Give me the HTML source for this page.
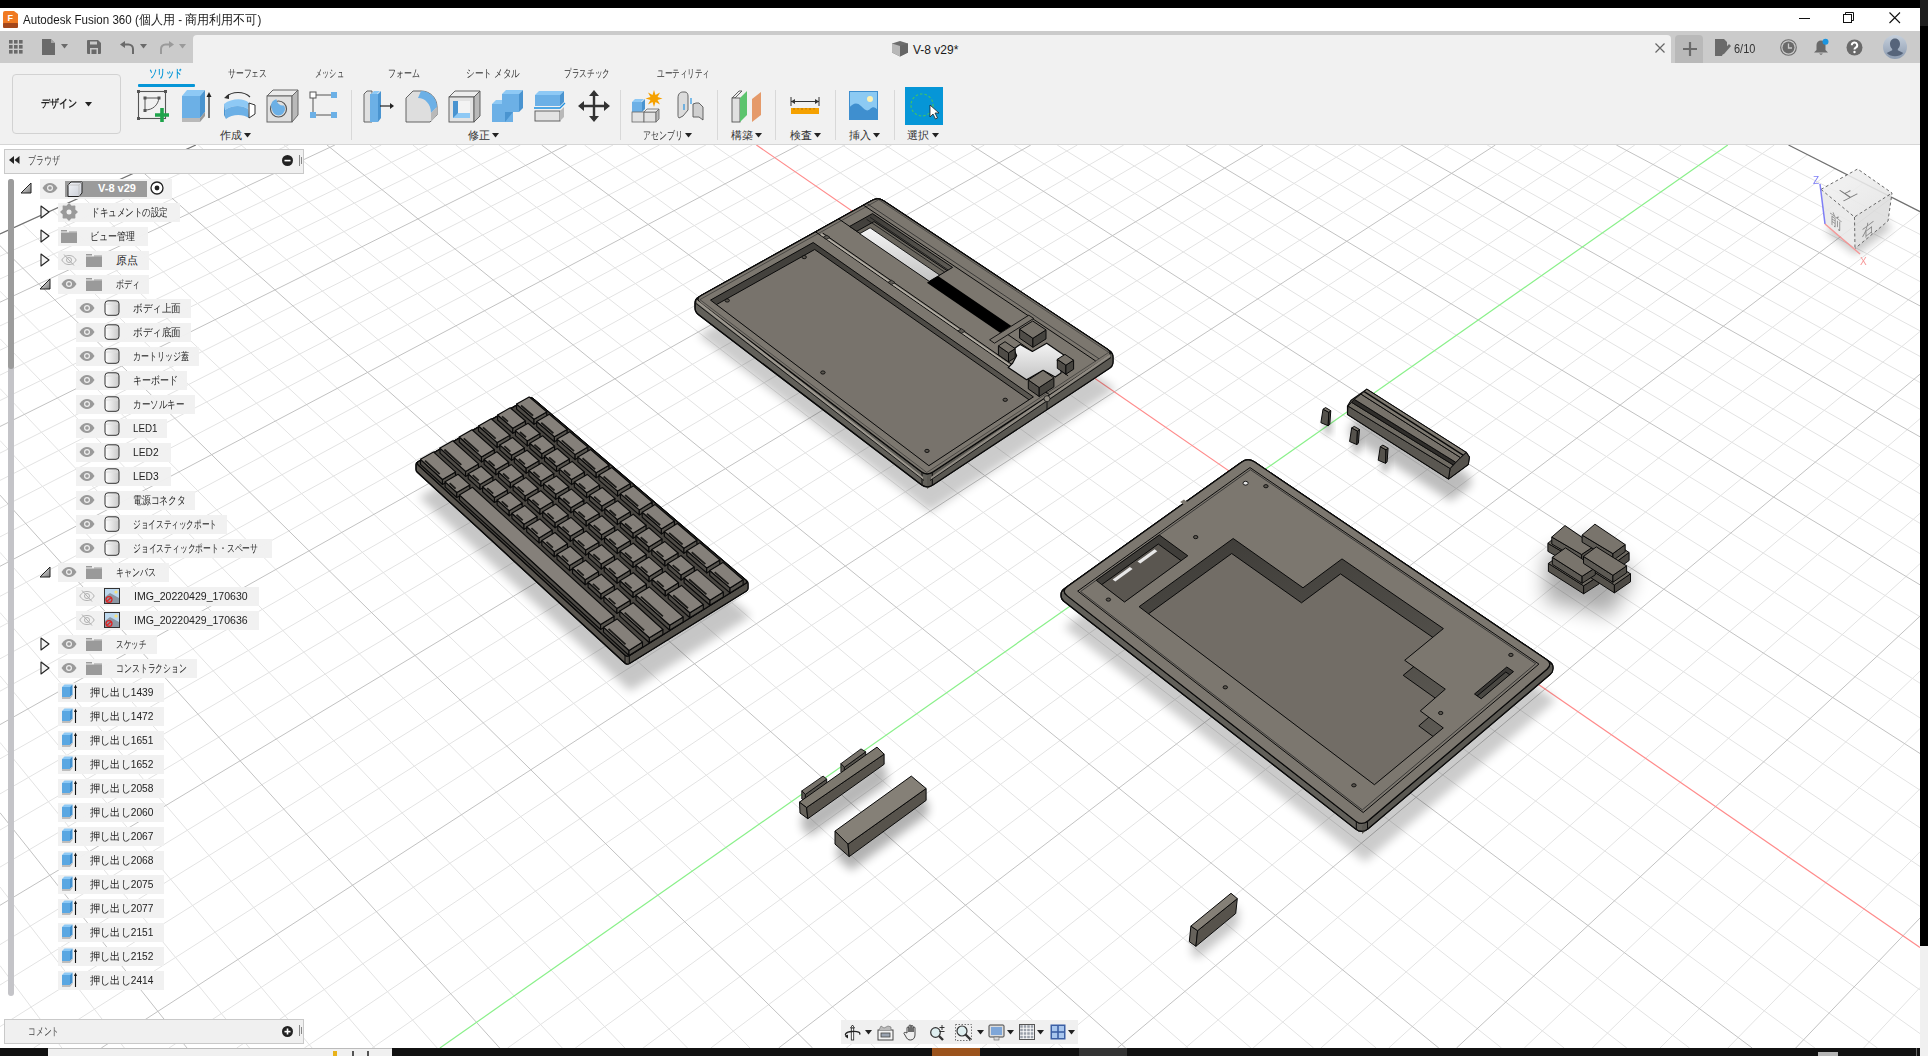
<!DOCTYPE html>
<html><head><meta charset="utf-8">
<style>
*{margin:0;padding:0;box-sizing:border-box}
html,body{width:1928px;height:1056px;overflow:hidden;background:#fff;font-family:"Liberation Sans",sans-serif;color:#222}
.a{position:absolute}
svg{position:absolute;overflow:visible}
</style></head><body>

<svg class="a" style="left:0;top:0" width="1928" height="1056" viewBox="0 0 1928 1056">
<clipPath id="gclip"><polygon points="195.8,145.0 1788.5,145.0 1920.0,211.6 1920.0,1048.0 0.0,1048.0 0.0,234.0"/></clipPath><g clip-path="url(#gclip)">
<path d="M0.0 965.6L61.9 1048.0M0.0 887.0L124.4 1048.0M0.0 742.4L249.5 1048.0M0.0 675.8L312.1 1048.0M0.0 612.5L374.6 1048.0M0.0 552.3L437.2 1048.0M0.0 440.5L562.3 1048.0M0.0 388.5L624.9 1048.0M0.0 338.7L687.5 1048.0M1920.0 987.5L1863.6 1048.0M0.0 291.2L750.0 1048.0M1920.0 851.8L1727.9 1048.0M0.0 202.2L875.2 1048.0M1920.0 788.8L1660.0 1048.0M0.0 160.4L937.8 1048.0M1920.0 728.6L1592.2 1048.0M26.6 145.0L1000.4 1048.0M1920.0 671.2L1524.3 1048.0M69.5 145.0L1063.0 1048.0M1920.0 563.7L1388.7 1048.0M155.3 145.0L1188.3 1048.0M1920.0 513.3L1320.9 1048.0M198.2 145.0L1250.9 1048.0M1920.0 465.0L1253.1 1048.0M241.1 145.0L1313.6 1048.0M1920.0 418.7L1185.3 1048.0M284.0 145.0L1376.2 1048.0M1920.0 331.5L1049.7 1048.0M369.9 145.0L1501.5 1048.0M1920.0 290.4L981.9 1048.0M412.8 145.0L1564.2 1048.0M1920.0 250.8L914.1 1048.0M455.7 145.0L1626.8 1048.0M1920.0 212.6L846.3 1048.0M498.7 145.0L1689.5 1048.0M1913.9 145.0L710.8 1048.0M584.5 145.0L1814.9 1048.0M1867.3 145.0L643.1 1048.0M627.5 145.0L1877.5 1048.0M1820.8 145.0L575.3 1048.0M1920.0 1033.6L670.4 145.0M1774.3 145.0L507.6 1048.0M1920.0 989.9L713.4 145.0M1681.3 145.0L372.1 1048.0M1920.0 906.4L799.3 145.0M1634.8 145.0L304.4 1048.0M1920.0 866.5L842.3 145.0M1588.3 145.0L236.7 1048.0M1920.0 827.8L885.2 145.0M1541.9 145.0L169.0 1048.0M1920.0 790.1L928.2 145.0M1448.9 145.0L33.6 1048.0M1920.0 717.9L1014.2 145.0M0.0 1026.6L1402.4 145.0M1920.0 683.2L1057.2 145.0M0.0 985.0L1356.0 145.0M1920.0 649.5L1100.1 145.0M0.0 944.6L1309.5 145.0M1920.0 616.7L1143.1 145.0M0.0 867.1L1216.6 145.0M1920.0 553.6L1229.1 145.0M0.0 830.0L1170.2 145.0M1920.0 523.3L1272.1 145.0M0.0 793.9L1123.7 145.0M1920.0 493.7L1315.1 145.0M0.0 758.8L1077.3 145.0M1920.0 464.9L1358.2 145.0M0.0 691.2L984.4 145.0M1920.0 409.3L1444.2 145.0M0.0 658.8L938.0 145.0M1920.0 382.5L1487.2 145.0M0.0 627.2L891.6 145.0M1920.0 356.4L1530.2 145.0M0.0 596.3L845.2 145.0M1920.0 330.8L1573.3 145.0M0.0 536.9L752.3 145.0M1920.0 281.5L1659.3 145.0M0.0 508.3L705.9 145.0M1920.0 257.7L1702.4 145.0M0.0 480.4L659.5 145.0M1920.0 234.4L1745.4 145.0M0.0 453.1L613.1 145.0M1920.0 211.6L1788.5 145.0M0.0 400.5L520.4 145.0M1920.0 167.5L1874.6 145.0M0.0 375.1L474.0 145.0M1920.0 146.1L1917.7 145.0M0.0 350.2L427.6 145.0M0.0 325.9L381.3 145.0M0.0 279.0L288.5 145.0M0.0 256.2L242.2 145.0M0.0 234.0L195.8 145.0M0.0 212.2L149.5 145.0M0.0 170.0L56.8 145.0M0.0 149.6L10.5 145.0" stroke="#e3e3e3" stroke-width="1" fill="none"/>
<path d="M0.0 812.7L187.0 1048.0M0.0 495.1L499.7 1048.0M1920.0 918.0L1795.7 1048.0M0.0 245.7L812.6 1048.0M1920.0 616.2L1456.5 1048.0M112.4 145.0L1125.7 1048.0M1920.0 374.2L1117.5 1048.0M327.0 145.0L1438.8 1048.0M1920.0 175.9L778.6 1048.0M541.6 145.0L1752.2 1048.0M1495.4 145.0L101.3 1048.0M1920.0 753.5L971.2 145.0M0.0 905.3L1263.1 145.0M1920.0 584.8L1186.1 145.0M0.0 724.6L1030.8 145.0M1920.0 436.8L1401.2 145.0M0.0 566.3L798.7 145.0M1920.0 305.9L1616.3 145.0M0.0 426.5L566.8 145.0M1920.0 189.3L1831.5 145.0M0.0 302.2L334.9 145.0M0.0 190.9L103.1 145.0" stroke="#c2c2c2" stroke-width="1" fill="none"/>
</g>
<line x1="1920.0" y1="211.6" x2="1788.5" y2="145.0" stroke="#707070" stroke-width="1.2"/>
<line x1="0.0" y1="234.0" x2="195.8" y2="145.0" stroke="#707070" stroke-width="1.2"/>
<path d="M1920.0 947.6L756.4 145.0" stroke="#ff8a8a" stroke-width="1.2" fill="none"/>
<path d="M1727.8 145.0L439.9 1048.0" stroke="#8af08a" stroke-width="1.2" fill="none"/>
<defs><filter id="blur3" x="-30%" y="-30%" width="160%" height="160%"><feGaussianBlur stdDeviation="3"/></filter><filter id="blur5" x="-30%" y="-30%" width="160%" height="160%"><feGaussianBlur stdDeviation="5"/></filter><filter id="blur8" x="-30%" y="-30%" width="160%" height="160%"><feGaussianBlur stdDeviation="8"/></filter><filter id="blur10" x="-30%" y="-30%" width="160%" height="160%"><feGaussianBlur stdDeviation="10"/></filter><linearGradient id="holeg" x1="0" y1="0" x2="0" y2="1"><stop offset="0" stop-color="#f4f4f4"/><stop offset="1" stop-color="#c4c4c4"/></linearGradient><linearGradient id="wallg" x1="0" y1="0" x2="0.3" y2="1"><stop offset="0" stop-color="#3e3c38"/><stop offset="1" stop-color="#5c5953"/></linearGradient></defs><g filter="url(#blur5)" opacity="0.2"><polygon points="698.0,335.0 930.0,512.0 1116.0,389.0 881.0,233.0" fill="#000"  /></g><path d="M871.9 200.4Q878.0 197.0 883.8 200.9L1109.5 350.7Q1113.0 353.0 1113.0 357.2L1113.0 361.8Q1113.0 366.0 1109.5 368.3L932.8 485.1Q927.0 489.0 921.4 484.8L698.3 314.5Q695.0 312.0 695.0 307.8L695.0 303.2Q695.0 299.0 698.7 297.0Z" fill="#62605a" stroke="#0a0a0a" stroke-width="1.2" stroke-linejoin="round"/><polygon points="927.0,476.0 1113.0,353.0 1113.0,366.0 927.0,489.0" fill="#5a5852"  /><path d="M701.1 295.6Q695.0 299.0 700.6 303.2L921.4 471.8Q927.0 476.0 932.8 472.1L1107.2 356.9Q1113.0 353.0 1107.2 349.1L883.8 200.9Q878.0 197.0 871.9 200.4Z" fill="#7c776f" stroke="#0a0a0a" stroke-width="1.2" stroke-linejoin="round"/><line x1="922.0" y1="472.2" x2="922.0" y2="484.7" stroke="#0a0a0a" stroke-width="1" /><line x1="932.3" y1="472.5" x2="932.3" y2="485.0" stroke="#0a0a0a" stroke-width="1" /><path d="M871.9 200.4Q878.0 197.0 883.8 200.9L1109.5 350.7Q1113.0 353.0 1113.0 357.2L1113.0 361.8Q1113.0 366.0 1109.5 368.3L932.8 485.1Q927.0 489.0 921.4 484.8L698.3 314.5Q695.0 312.0 695.0 307.8L695.0 303.2Q695.0 299.0 698.7 297.0Z" fill="none" stroke="#0a0a0a" stroke-width="1.2" stroke-linejoin="round"/><path d="M701.1 295.6Q695.0 299.0 700.6 303.2L921.4 471.8Q927.0 476.0 932.8 472.1L1107.2 356.9Q1113.0 353.0 1107.2 349.1L883.8 200.9Q878.0 197.0 871.9 200.4Z" fill="#7c776f" stroke="#0a0a0a" stroke-width="1.2" stroke-linejoin="round"/><polygon points="697.0,300.0 923.0,477.0 923.0,480.0 697.0,303.0" fill="#9c978e"  /><polygon points="931.0,477.0 1110.0,354.0 1110.0,357.0 931.0,480.0" fill="#8f8a82"  /><line x1="696.0" y1="303.5" x2="924.0" y2="480.5" stroke="#0a0a0a" stroke-width="0.9" /><line x1="930.0" y1="480.5" x2="1111.0" y2="357.5" stroke="#0a0a0a" stroke-width="0.9" /><clipPath id="lidpk"><polygon points="710.5,300.1 928.9,465.7 1033.4,396.9 813.2,242.5"/></clipPath><polygon points="710.5,300.1 928.9,465.7 1033.4,396.9 813.2,242.5" fill="url(#wallg)"  /><g clip-path="url(#lidpk)"><polygon points="712.0,307.1 930.4,472.7 1034.9,403.9 814.7,249.5" fill="#78736c" stroke="#0a0a0a" stroke-width="1" stroke-linejoin="round" /></g><polygon points="710.5,300.1 928.9,465.7 1033.4,396.9 813.2,242.5" fill="none" stroke="#0a0a0a" stroke-width="1" stroke-linejoin="round" /><polygon points="699.9,299.6 926.8,472.5 1108.7,352.4 878.8,199.7" fill="none" stroke="#2a2a2a" stroke-width="0.6" stroke-linejoin="round" /><line x1="815.5" y1="231.8" x2="1049.7" y2="394.8" stroke="#0a0a0a" stroke-width="1" /><line x1="821.0" y1="234.1" x2="1043.3" y2="388.7" stroke="#b5b0a6" stroke-width="1.6" /><line x1="822.8" y1="233.1" x2="1045.1" y2="387.5" stroke="#0a0a0a" stroke-width="1" /><polygon points="823.2,237.2 826.4,239.4 830.0,237.4 826.8,235.2" fill="#5d5a54" stroke="#0a0a0a" stroke-width="0.7" stroke-linejoin="round" /><polygon points="888.0,282.3 891.4,284.7 895.0,282.5 891.6,280.2" fill="#5d5a54" stroke="#0a0a0a" stroke-width="0.7" stroke-linejoin="round" /><polygon points="957.9,330.9 961.5,333.4 965.1,331.2 961.5,328.7" fill="#5d5a54" stroke="#0a0a0a" stroke-width="0.7" stroke-linejoin="round" /><line x1="838.7" y1="218.9" x2="1068.1" y2="375.8" stroke="#0a0a0a" stroke-width="1" /><clipPath id="lidch"><polygon points="849.6,226.4 929.6,281.1 952.6,267.4 872.5,213.6"/></clipPath><polygon points="849.6,226.4 929.6,281.1 952.6,267.4 872.5,213.6" fill="url(#wallg)"  /><g clip-path="url(#lidch)"><polygon points="851.1,234.4 931.1,289.1 954.1,275.4 874.0,221.6" fill="#6a665e" stroke="#0a0a0a" stroke-width="1" stroke-linejoin="round" /></g><polygon points="849.6,226.4 929.6,281.1 952.6,267.4 872.5,213.6" fill="none" stroke="#0a0a0a" stroke-width="1" stroke-linejoin="round" /><line x1="870.1" y1="217.3" x2="948.2" y2="270.0" stroke="#1a1a1a" stroke-width="0.9" /><line x1="866.6" y1="219.3" x2="944.7" y2="272.1" stroke="#1a1a1a" stroke-width="0.9" /><polygon points="859.7,233.7 929.2,281.3 939.7,275.1 870.1,227.8" fill="url(#holeg)" stroke="#0a0a0a" stroke-width="0.9" stroke-linejoin="round" /><polygon points="926.9,282.7 1000.4,333.0 1011.4,326.0 938.0,276.1" fill="#000"  /><line x1="863.4" y1="205.1" x2="1095.7" y2="361.0" stroke="#0a0a0a" stroke-width="1" /><line x1="866.7" y1="203.3" x2="1099.1" y2="358.8" stroke="#2a2a2a" stroke-width="0.8" /><polygon points="989.6,339.8 994.5,343.2 1033.7,318.4 1028.8,315.2" fill="#7c776f" stroke="#0a0a0a" stroke-width="0.9" stroke-linejoin="round" /><polygon points="1008.2,367.6 1026.5,379.7 1043.1,370.3 1055.2,377.1 1061.0,372.9 1061.1,366.0 1057.3,360.3 1064.6,355.6 1046.7,343.2 1032.4,351.4 1020.2,344.4 1013.6,348.9 1016.6,355.6 1012.7,363.0" fill="url(#holeg)" stroke="#0a0a0a" stroke-width="1.2" stroke-linejoin="round" /><polygon points="1019.6,329.2 1032.9,338.3 1032.9,347.3 1019.6,338.2" fill="#4f4c47" stroke="#0a0a0a" stroke-width="1" stroke-linejoin="round" /><polygon points="1032.9,338.3 1046.0,329.9 1046.0,338.9 1032.9,347.3" fill="#46443f" stroke="#0a0a0a" stroke-width="1" stroke-linejoin="round" /><polygon points="1019.6,329.2 1032.9,338.3 1046.0,329.9 1032.7,321.0" fill="#77726a" stroke="#0a0a0a" stroke-width="1" stroke-linejoin="round" /><polygon points="1057.3,359.3 1065.9,365.2 1065.9,374.2 1057.3,368.3" fill="#4f4c47" stroke="#0a0a0a" stroke-width="1" stroke-linejoin="round" /><polygon points="1065.9,365.2 1073.6,360.2 1073.6,369.2 1065.9,374.2" fill="#46443f" stroke="#0a0a0a" stroke-width="1" stroke-linejoin="round" /><polygon points="1057.3,359.3 1065.9,365.2 1073.6,360.2 1065.0,354.4" fill="#77726a" stroke="#0a0a0a" stroke-width="1" stroke-linejoin="round" /><polygon points="998.4,345.9 1008.5,352.9 1008.5,361.9 998.4,354.9" fill="#4f4c47" stroke="#0a0a0a" stroke-width="1" stroke-linejoin="round" /><polygon points="1008.5,352.9 1015.2,348.6 1015.2,357.6 1008.5,361.9" fill="#46443f" stroke="#0a0a0a" stroke-width="1" stroke-linejoin="round" /><polygon points="998.4,345.9 1008.5,352.9 1015.2,348.6 1005.0,341.7" fill="#77726a" stroke="#0a0a0a" stroke-width="1" stroke-linejoin="round" /><polygon points="1028.3,379.9 1039.2,387.5 1039.2,396.5 1028.3,388.9" fill="#4f4c47" stroke="#0a0a0a" stroke-width="1" stroke-linejoin="round" /><polygon points="1039.2,387.5 1053.9,377.9 1053.9,386.9 1039.2,396.5" fill="#46443f" stroke="#0a0a0a" stroke-width="1" stroke-linejoin="round" /><polygon points="1028.3,379.9 1039.2,387.5 1053.9,377.9 1043.0,370.4" fill="#77726a" stroke="#0a0a0a" stroke-width="1" stroke-linejoin="round" /><ellipse cx="804.2" cy="257.1" rx="2.2" ry="1.6" fill="#5b5750" stroke="#0a0a0a" stroke-width="0.9"/><ellipse cx="727.2" cy="300.5" rx="2.2" ry="1.6" fill="#5b5750" stroke="#0a0a0a" stroke-width="0.9"/><ellipse cx="822.9" cy="372.5" rx="2.2" ry="1.6" fill="#5b5750" stroke="#0a0a0a" stroke-width="0.9"/><ellipse cx="927.0" cy="450.9" rx="2.2" ry="1.6" fill="#5b5750" stroke="#0a0a0a" stroke-width="0.9"/><ellipse cx="1005.2" cy="399.8" rx="2.2" ry="1.6" fill="#5b5750" stroke="#0a0a0a" stroke-width="0.9"/><line x1="1047.0" y1="396.7" x2="1047.0" y2="409.7" stroke="#0a0a0a" stroke-width="0.9" /><circle cx="1047.0" cy="398.7" r="3" fill="#8f8a81" stroke="#141414" stroke-width=".8"/><g filter="url(#blur5)" opacity="0.22"><polygon points="419.0,497.0 630.0,691.0 751.0,616.0 534.0,431.0" fill="#000"  /></g><path d="M528.4 398.5Q531.0 397.0 533.3 398.9L746.6 580.8Q748.0 582.0 748.0 583.8L748.0 588.2Q748.0 590.0 746.5 590.9L629.5 663.4Q627.0 665.0 624.8 663.0L417.3 472.2Q416.0 471.0 416.0 469.2L416.0 464.8Q416.0 463.0 417.6 462.1Z" fill="#5a5650" stroke="#0a0a0a" stroke-width="1.2" stroke-linejoin="round"/><polygon points="627.0,657.0 748.0,582.0 748.0,590.0 627.0,665.0" fill="#524f49"  /><path d="M418.6 461.5Q416.0 463.0 418.2 465.0L624.8 655.0Q627.0 657.0 629.5 655.4L745.5 583.6Q748.0 582.0 745.7 580.1L533.3 398.9Q531.0 397.0 528.4 398.5Z" fill="#4a4742" stroke="#0a0a0a" stroke-width="1.2" stroke-linejoin="round"/><line x1="625.0" y1="655.2" x2="625.0" y2="662.7" stroke="#0a0a0a" stroke-width="1" /><line x1="629.3" y1="655.6" x2="629.3" y2="663.1" stroke="#0a0a0a" stroke-width="1" /><path d="M528.4 398.5Q531.0 397.0 533.3 398.9L746.6 580.8Q748.0 582.0 748.0 583.8L748.0 588.2Q748.0 590.0 746.5 590.9L629.5 663.4Q627.0 665.0 624.8 663.0L417.3 472.2Q416.0 471.0 416.0 469.2L416.0 464.8Q416.0 463.0 417.6 462.1Z" fill="none" stroke="#0a0a0a" stroke-width="1.2" stroke-linejoin="round"/><path d="M418.6 461.5Q416.0 463.0 418.2 465.0L624.8 655.0Q627.0 657.0 629.5 655.4L745.5 583.6Q748.0 582.0 745.7 580.1L533.3 398.9Q531.0 397.0 528.4 398.5Z" fill="#4a4742" stroke="#0a0a0a" stroke-width="1.2" stroke-linejoin="round"/><polygon points="516.6,404.1 534.0,419.2 534.0,424.2 516.6,409.1" fill="#4f4c47" stroke="#0a0a0a" stroke-width="1.15" stroke-linejoin="round" /><polygon points="534.0,419.2 546.7,411.9 546.7,416.9 534.0,424.2" fill="#57544e" stroke="#0a0a0a" stroke-width="1.15" stroke-linejoin="round" /><polygon points="516.6,404.1 534.0,419.2 546.7,411.9 529.1,396.9" fill="#85807a" stroke="#0a0a0a" stroke-width="1.15" stroke-linejoin="round" /><line x1="521.0" y1="405.5" x2="533.1" y2="415.8" stroke="#1c1b19" stroke-width="1.8" /><polygon points="536.7,421.5 554.4,436.8 554.4,441.8 536.7,426.5" fill="#4f4c47" stroke="#0a0a0a" stroke-width="1.15" stroke-linejoin="round" /><polygon points="554.4,436.8 567.1,429.4 567.1,434.4 554.4,441.8" fill="#57544e" stroke="#0a0a0a" stroke-width="1.15" stroke-linejoin="round" /><polygon points="536.7,421.5 554.4,436.8 567.1,429.4 549.3,414.2" fill="#85807a" stroke="#0a0a0a" stroke-width="1.15" stroke-linejoin="round" /><line x1="541.2" y1="422.8" x2="553.4" y2="433.3" stroke="#1c1b19" stroke-width="1.8" /><polygon points="557.1,439.1 575.1,454.6 575.1,459.6 557.1,444.1" fill="#4f4c47" stroke="#0a0a0a" stroke-width="1.15" stroke-linejoin="round" /><polygon points="575.1,454.6 587.9,447.1 587.9,452.1 575.1,459.6" fill="#57544e" stroke="#0a0a0a" stroke-width="1.15" stroke-linejoin="round" /><polygon points="557.1,439.1 575.1,454.6 587.9,447.1 569.8,431.7" fill="#85807a" stroke="#0a0a0a" stroke-width="1.15" stroke-linejoin="round" /><line x1="561.7" y1="440.4" x2="574.1" y2="451.1" stroke="#1c1b19" stroke-width="1.8" /><polygon points="577.9,456.9 596.2,472.7 596.2,477.7 577.9,461.9" fill="#4f4c47" stroke="#0a0a0a" stroke-width="1.15" stroke-linejoin="round" /><polygon points="596.2,472.7 609.0,465.2 609.0,470.2 596.2,477.7" fill="#57544e" stroke="#0a0a0a" stroke-width="1.15" stroke-linejoin="round" /><polygon points="577.9,456.9 596.2,472.7 609.0,465.2 590.6,449.5" fill="#85807a" stroke="#0a0a0a" stroke-width="1.15" stroke-linejoin="round" /><line x1="582.5" y1="458.3" x2="595.1" y2="469.2" stroke="#1c1b19" stroke-width="1.8" /><polygon points="599.0,475.1 617.6,491.1 617.6,496.1 599.0,480.1" fill="#4f4c47" stroke="#0a0a0a" stroke-width="1.15" stroke-linejoin="round" /><polygon points="617.6,491.1 630.4,483.5 630.4,488.5 617.6,496.1" fill="#57544e" stroke="#0a0a0a" stroke-width="1.15" stroke-linejoin="round" /><polygon points="599.0,475.1 617.6,491.1 630.4,483.5 611.8,467.5" fill="#85807a" stroke="#0a0a0a" stroke-width="1.15" stroke-linejoin="round" /><line x1="603.6" y1="476.5" x2="616.5" y2="487.6" stroke="#1c1b19" stroke-width="1.8" /><polygon points="620.4,493.6 639.3,509.9 639.3,514.9 620.4,498.6" fill="#4f4c47" stroke="#0a0a0a" stroke-width="1.15" stroke-linejoin="round" /><polygon points="639.3,509.9 652.2,502.1 652.2,507.1 639.3,514.9" fill="#57544e" stroke="#0a0a0a" stroke-width="1.15" stroke-linejoin="round" /><polygon points="620.4,493.6 639.3,509.9 652.2,502.1 633.3,485.9" fill="#85807a" stroke="#0a0a0a" stroke-width="1.15" stroke-linejoin="round" /><line x1="625.1" y1="495.0" x2="638.2" y2="506.2" stroke="#1c1b19" stroke-width="1.8" /><polygon points="642.2,512.3 661.4,528.9 661.4,533.9 642.2,517.3" fill="#4f4c47" stroke="#0a0a0a" stroke-width="1.15" stroke-linejoin="round" /><polygon points="661.4,528.9 674.4,521.0 674.4,526.0 661.4,533.9" fill="#57544e" stroke="#0a0a0a" stroke-width="1.15" stroke-linejoin="round" /><polygon points="642.2,512.3 661.4,528.9 674.4,521.0 655.1,504.6" fill="#85807a" stroke="#0a0a0a" stroke-width="1.15" stroke-linejoin="round" /><line x1="646.9" y1="513.8" x2="660.2" y2="525.2" stroke="#1c1b19" stroke-width="1.8" /><polygon points="664.3,531.4 683.9,548.2 683.9,553.2 664.3,536.4" fill="#4f4c47" stroke="#0a0a0a" stroke-width="1.15" stroke-linejoin="round" /><polygon points="683.9,548.2 696.9,540.3 696.9,545.3 683.9,553.2" fill="#57544e" stroke="#0a0a0a" stroke-width="1.15" stroke-linejoin="round" /><polygon points="664.3,531.4 683.9,548.2 696.9,540.3 677.3,523.5" fill="#85807a" stroke="#0a0a0a" stroke-width="1.15" stroke-linejoin="round" /><line x1="669.1" y1="532.9" x2="682.6" y2="544.5" stroke="#1c1b19" stroke-width="1.8" /><polygon points="686.8,550.8 706.7,567.9 706.7,572.9 686.8,555.8" fill="#4f4c47" stroke="#0a0a0a" stroke-width="1.15" stroke-linejoin="round" /><polygon points="706.7,567.9 719.8,559.9 719.8,564.9 706.7,572.9" fill="#57544e" stroke="#0a0a0a" stroke-width="1.15" stroke-linejoin="round" /><polygon points="686.8,550.8 706.7,567.9 719.8,559.9 699.9,542.8" fill="#85807a" stroke="#0a0a0a" stroke-width="1.15" stroke-linejoin="round" /><line x1="691.7" y1="552.3" x2="705.4" y2="564.1" stroke="#1c1b19" stroke-width="1.8" /><polygon points="709.7,570.5 730.0,587.9 730.0,592.9 709.7,575.5" fill="#4f4c47" stroke="#0a0a0a" stroke-width="1.15" stroke-linejoin="round" /><polygon points="730.0,587.9 743.1,579.8 743.1,584.8 730.0,592.9" fill="#57544e" stroke="#0a0a0a" stroke-width="1.15" stroke-linejoin="round" /><polygon points="709.7,570.5 730.0,587.9 743.1,579.8 722.9,562.4" fill="#85807a" stroke="#0a0a0a" stroke-width="1.15" stroke-linejoin="round" /><line x1="714.7" y1="572.1" x2="728.6" y2="584.1" stroke="#1c1b19" stroke-width="1.8" /><polygon points="497.6,415.0 512.8,428.3 512.8,433.3 497.6,420.0" fill="#4f4c47" stroke="#0a0a0a" stroke-width="1.15" stroke-linejoin="round" /><polygon points="512.8,428.3 525.5,421.0 525.5,426.0 512.8,433.3" fill="#57544e" stroke="#0a0a0a" stroke-width="1.15" stroke-linejoin="round" /><polygon points="497.6,415.0 512.8,428.3 525.5,421.0 510.2,407.8" fill="#85807a" stroke="#0a0a0a" stroke-width="1.15" stroke-linejoin="round" /><line x1="502.0" y1="416.4" x2="508.0" y2="421.6" stroke="#1c1b19" stroke-width="1.8" /><polygon points="515.4,430.6 527.3,440.9 527.3,445.9 515.4,435.6" fill="#4f4c47" stroke="#0a0a0a" stroke-width="1.15" stroke-linejoin="round" /><polygon points="527.3,440.9 540.0,433.5 540.0,438.5 527.3,445.9" fill="#57544e" stroke="#0a0a0a" stroke-width="1.15" stroke-linejoin="round" /><polygon points="515.4,430.6 527.3,440.9 540.0,433.5 528.1,423.3" fill="#85807a" stroke="#0a0a0a" stroke-width="1.15" stroke-linejoin="round" /><line x1="519.9" y1="432.0" x2="526.0" y2="437.3" stroke="#1c1b19" stroke-width="1.8" /><polygon points="529.9,443.2 541.9,453.7 541.9,458.7 529.9,448.2" fill="#4f4c47" stroke="#0a0a0a" stroke-width="1.15" stroke-linejoin="round" /><polygon points="541.9,453.7 554.6,446.2 554.6,451.2 541.9,458.7" fill="#57544e" stroke="#0a0a0a" stroke-width="1.15" stroke-linejoin="round" /><polygon points="529.9,443.2 541.9,453.7 554.6,446.2 542.6,435.8" fill="#85807a" stroke="#0a0a0a" stroke-width="1.15" stroke-linejoin="round" /><line x1="534.4" y1="444.6" x2="540.6" y2="450.0" stroke="#1c1b19" stroke-width="1.8" /><polygon points="544.5,456.0 556.6,466.5 556.6,471.5 544.5,461.0" fill="#4f4c47" stroke="#0a0a0a" stroke-width="1.15" stroke-linejoin="round" /><polygon points="556.6,466.5 569.4,459.0 569.4,464.0 556.6,471.5" fill="#57544e" stroke="#0a0a0a" stroke-width="1.15" stroke-linejoin="round" /><polygon points="544.5,456.0 556.6,466.5 569.4,459.0 557.3,448.5" fill="#85807a" stroke="#0a0a0a" stroke-width="1.15" stroke-linejoin="round" /><line x1="549.1" y1="457.4" x2="555.3" y2="462.8" stroke="#1c1b19" stroke-width="1.8" /><polygon points="559.3,468.9 571.6,479.6 571.6,484.6 559.3,473.9" fill="#4f4c47" stroke="#0a0a0a" stroke-width="1.15" stroke-linejoin="round" /><polygon points="571.6,479.6 584.4,472.0 584.4,477.0 571.6,484.6" fill="#57544e" stroke="#0a0a0a" stroke-width="1.15" stroke-linejoin="round" /><polygon points="559.3,468.9 571.6,479.6 584.4,472.0 572.1,461.4" fill="#85807a" stroke="#0a0a0a" stroke-width="1.15" stroke-linejoin="round" /><line x1="563.9" y1="470.3" x2="570.2" y2="475.8" stroke="#1c1b19" stroke-width="1.8" /><polygon points="574.3,482.0 586.7,492.7 586.7,497.7 574.3,487.0" fill="#4f4c47" stroke="#0a0a0a" stroke-width="1.15" stroke-linejoin="round" /><polygon points="586.7,492.7 599.6,485.1 599.6,490.1 586.7,497.7" fill="#57544e" stroke="#0a0a0a" stroke-width="1.15" stroke-linejoin="round" /><polygon points="574.3,482.0 586.7,492.7 599.6,485.1 587.2,474.4" fill="#85807a" stroke="#0a0a0a" stroke-width="1.15" stroke-linejoin="round" /><line x1="578.9" y1="483.4" x2="585.3" y2="488.9" stroke="#1c1b19" stroke-width="1.8" /><polygon points="589.4,495.2 602.0,506.1 602.0,511.1 589.4,500.2" fill="#4f4c47" stroke="#0a0a0a" stroke-width="1.15" stroke-linejoin="round" /><polygon points="602.0,506.1 614.9,498.4 614.9,503.4 602.0,511.1" fill="#57544e" stroke="#0a0a0a" stroke-width="1.15" stroke-linejoin="round" /><polygon points="589.4,495.2 602.0,506.1 614.9,498.4 602.3,487.5" fill="#85807a" stroke="#0a0a0a" stroke-width="1.15" stroke-linejoin="round" /><line x1="594.1" y1="496.6" x2="600.5" y2="502.2" stroke="#1c1b19" stroke-width="1.8" /><polygon points="604.8,508.5 617.4,519.6 617.4,524.6 604.8,513.5" fill="#4f4c47" stroke="#0a0a0a" stroke-width="1.15" stroke-linejoin="round" /><polygon points="617.4,519.6 630.4,511.8 630.4,516.8 617.4,524.6" fill="#57544e" stroke="#0a0a0a" stroke-width="1.15" stroke-linejoin="round" /><polygon points="604.8,508.5 617.4,519.6 630.4,511.8 617.7,500.8" fill="#85807a" stroke="#0a0a0a" stroke-width="1.15" stroke-linejoin="round" /><line x1="609.5" y1="510.0" x2="616.0" y2="515.7" stroke="#1c1b19" stroke-width="1.8" /><polygon points="620.3,522.0 633.1,533.2 633.1,538.2 620.3,527.0" fill="#4f4c47" stroke="#0a0a0a" stroke-width="1.15" stroke-linejoin="round" /><polygon points="633.1,533.2 646.1,525.3 646.1,530.3 633.1,538.2" fill="#57544e" stroke="#0a0a0a" stroke-width="1.15" stroke-linejoin="round" /><polygon points="620.3,522.0 633.1,533.2 646.1,525.3 633.3,514.2" fill="#85807a" stroke="#0a0a0a" stroke-width="1.15" stroke-linejoin="round" /><line x1="625.0" y1="523.5" x2="631.6" y2="529.3" stroke="#1c1b19" stroke-width="1.8" /><polygon points="635.9,535.7 648.9,547.0 648.9,552.0 635.9,540.7" fill="#4f4c47" stroke="#0a0a0a" stroke-width="1.15" stroke-linejoin="round" /><polygon points="648.9,547.0 662.0,539.1 662.0,544.1 648.9,552.0" fill="#57544e" stroke="#0a0a0a" stroke-width="1.15" stroke-linejoin="round" /><polygon points="635.9,535.7 648.9,547.0 662.0,539.1 649.0,527.8" fill="#85807a" stroke="#0a0a0a" stroke-width="1.15" stroke-linejoin="round" /><line x1="640.7" y1="537.2" x2="647.4" y2="543.0" stroke="#1c1b19" stroke-width="1.8" /><polygon points="651.8,549.6 664.9,561.0 664.9,566.0 651.8,554.6" fill="#4f4c47" stroke="#0a0a0a" stroke-width="1.15" stroke-linejoin="round" /><polygon points="664.9,561.0 678.1,553.0 678.1,558.0 664.9,566.0" fill="#57544e" stroke="#0a0a0a" stroke-width="1.15" stroke-linejoin="round" /><polygon points="651.8,549.6 664.9,561.0 678.1,553.0 664.9,541.6" fill="#85807a" stroke="#0a0a0a" stroke-width="1.15" stroke-linejoin="round" /><line x1="656.6" y1="551.1" x2="663.4" y2="556.9" stroke="#1c1b19" stroke-width="1.8" /><polygon points="667.9,563.6 681.1,575.1 681.1,580.1 667.9,568.6" fill="#4f4c47" stroke="#0a0a0a" stroke-width="1.15" stroke-linejoin="round" /><polygon points="681.1,575.1 694.3,567.1 694.3,572.1 681.1,580.1" fill="#57544e" stroke="#0a0a0a" stroke-width="1.15" stroke-linejoin="round" /><polygon points="667.9,563.6 681.1,575.1 694.3,567.1 681.0,555.5" fill="#85807a" stroke="#0a0a0a" stroke-width="1.15" stroke-linejoin="round" /><line x1="672.7" y1="565.1" x2="679.6" y2="571.0" stroke="#1c1b19" stroke-width="1.8" /><polygon points="684.1,577.7 710.0,600.3 710.0,605.3 684.1,582.7" fill="#4f4c47" stroke="#0a0a0a" stroke-width="1.15" stroke-linejoin="round" /><polygon points="710.0,600.3 723.3,592.1 723.3,597.1 710.0,605.3" fill="#57544e" stroke="#0a0a0a" stroke-width="1.15" stroke-linejoin="round" /><polygon points="684.1,577.7 710.0,600.3 723.3,592.1 697.3,569.6" fill="#85807a" stroke="#0a0a0a" stroke-width="1.15" stroke-linejoin="round" /><line x1="689.0" y1="579.3" x2="706.4" y2="594.4" stroke="#1c1b19" stroke-width="1.8" /><polygon points="478.5,426.0 497.2,442.6 497.2,447.6 478.5,431.0" fill="#4f4c47" stroke="#0a0a0a" stroke-width="1.15" stroke-linejoin="round" /><polygon points="497.2,442.6 510.0,435.2 510.0,440.2 497.2,447.6" fill="#57544e" stroke="#0a0a0a" stroke-width="1.15" stroke-linejoin="round" /><polygon points="478.5,426.0 497.2,442.6 510.0,435.2 491.2,418.7" fill="#85807a" stroke="#0a0a0a" stroke-width="1.15" stroke-linejoin="round" /><line x1="482.9" y1="427.4" x2="495.7" y2="438.7" stroke="#1c1b19" stroke-width="1.8" /><polygon points="499.8,444.9 511.6,455.3 511.6,460.3 499.8,449.9" fill="#4f4c47" stroke="#0a0a0a" stroke-width="1.15" stroke-linejoin="round" /><polygon points="511.6,455.3 524.4,447.9 524.4,452.9 511.6,460.3" fill="#57544e" stroke="#0a0a0a" stroke-width="1.15" stroke-linejoin="round" /><polygon points="499.8,444.9 511.6,455.3 524.4,447.9 512.6,437.5" fill="#85807a" stroke="#0a0a0a" stroke-width="1.15" stroke-linejoin="round" /><line x1="504.3" y1="446.2" x2="510.4" y2="451.6" stroke="#1c1b19" stroke-width="1.8" /><polygon points="514.3,457.6 526.2,468.2 526.2,473.2 514.3,462.6" fill="#4f4c47" stroke="#0a0a0a" stroke-width="1.15" stroke-linejoin="round" /><polygon points="526.2,468.2 539.0,460.7 539.0,465.7 526.2,473.2" fill="#57544e" stroke="#0a0a0a" stroke-width="1.15" stroke-linejoin="round" /><polygon points="514.3,457.6 526.2,468.2 539.0,460.7 527.1,450.2" fill="#85807a" stroke="#0a0a0a" stroke-width="1.15" stroke-linejoin="round" /><line x1="518.8" y1="459.0" x2="524.9" y2="464.4" stroke="#1c1b19" stroke-width="1.8" /><polygon points="528.9,470.5 540.9,481.2 540.9,486.2 528.9,475.5" fill="#4f4c47" stroke="#0a0a0a" stroke-width="1.15" stroke-linejoin="round" /><polygon points="540.9,481.2 553.8,473.6 553.8,478.6 540.9,486.2" fill="#57544e" stroke="#0a0a0a" stroke-width="1.15" stroke-linejoin="round" /><polygon points="528.9,470.5 540.9,481.2 553.8,473.6 541.7,463.0" fill="#85807a" stroke="#0a0a0a" stroke-width="1.15" stroke-linejoin="round" /><line x1="533.4" y1="471.9" x2="539.6" y2="477.4" stroke="#1c1b19" stroke-width="1.8" /><polygon points="543.6,483.6 555.8,494.3 555.8,499.3 543.6,488.6" fill="#4f4c47" stroke="#0a0a0a" stroke-width="1.15" stroke-linejoin="round" /><polygon points="555.8,494.3 568.8,486.7 568.8,491.7 555.8,499.3" fill="#57544e" stroke="#0a0a0a" stroke-width="1.15" stroke-linejoin="round" /><polygon points="543.6,483.6 555.8,494.3 568.8,486.7 556.5,476.0" fill="#85807a" stroke="#0a0a0a" stroke-width="1.15" stroke-linejoin="round" /><line x1="548.2" y1="485.0" x2="554.5" y2="490.5" stroke="#1c1b19" stroke-width="1.8" /><polygon points="558.6,496.8 570.9,507.7 570.9,512.7 558.6,501.8" fill="#4f4c47" stroke="#0a0a0a" stroke-width="1.15" stroke-linejoin="round" /><polygon points="570.9,507.7 583.9,500.0 583.9,505.0 570.9,512.7" fill="#57544e" stroke="#0a0a0a" stroke-width="1.15" stroke-linejoin="round" /><polygon points="558.6,496.8 570.9,507.7 583.9,500.0 571.5,489.1" fill="#85807a" stroke="#0a0a0a" stroke-width="1.15" stroke-linejoin="round" /><line x1="563.2" y1="498.2" x2="569.6" y2="503.8" stroke="#1c1b19" stroke-width="1.8" /><polygon points="573.7,510.1 586.2,521.1 586.2,526.1 573.7,515.1" fill="#4f4c47" stroke="#0a0a0a" stroke-width="1.15" stroke-linejoin="round" /><polygon points="586.2,521.1 599.2,513.4 599.2,518.4 586.2,526.1" fill="#57544e" stroke="#0a0a0a" stroke-width="1.15" stroke-linejoin="round" /><polygon points="573.7,510.1 586.2,521.1 599.2,513.4 586.7,502.4" fill="#85807a" stroke="#0a0a0a" stroke-width="1.15" stroke-linejoin="round" /><line x1="578.4" y1="511.6" x2="584.8" y2="517.2" stroke="#1c1b19" stroke-width="1.8" /><polygon points="589.0,523.6 601.6,534.8 601.6,539.8 589.0,528.6" fill="#4f4c47" stroke="#0a0a0a" stroke-width="1.15" stroke-linejoin="round" /><polygon points="601.6,534.8 614.7,526.9 614.7,531.9 601.6,539.8" fill="#57544e" stroke="#0a0a0a" stroke-width="1.15" stroke-linejoin="round" /><polygon points="589.0,523.6 601.6,534.8 614.7,526.9 602.0,515.8" fill="#85807a" stroke="#0a0a0a" stroke-width="1.15" stroke-linejoin="round" /><line x1="593.7" y1="525.1" x2="600.2" y2="530.8" stroke="#1c1b19" stroke-width="1.8" /><polygon points="604.5,537.3 617.3,548.6 617.3,553.6 604.5,542.3" fill="#4f4c47" stroke="#0a0a0a" stroke-width="1.15" stroke-linejoin="round" /><polygon points="617.3,548.6 630.4,540.6 630.4,545.6 617.3,553.6" fill="#57544e" stroke="#0a0a0a" stroke-width="1.15" stroke-linejoin="round" /><polygon points="604.5,537.3 617.3,548.6 630.4,540.6 617.6,529.4" fill="#85807a" stroke="#0a0a0a" stroke-width="1.15" stroke-linejoin="round" /><line x1="609.2" y1="538.8" x2="615.8" y2="544.6" stroke="#1c1b19" stroke-width="1.8" /><polygon points="620.1,551.1 633.1,562.5 633.1,567.5 620.1,556.1" fill="#4f4c47" stroke="#0a0a0a" stroke-width="1.15" stroke-linejoin="round" /><polygon points="633.1,562.5 646.2,554.5 646.2,559.5 633.1,567.5" fill="#57544e" stroke="#0a0a0a" stroke-width="1.15" stroke-linejoin="round" /><polygon points="620.1,551.1 633.1,562.5 646.2,554.5 633.3,543.2" fill="#85807a" stroke="#0a0a0a" stroke-width="1.15" stroke-linejoin="round" /><line x1="624.9" y1="552.6" x2="631.6" y2="558.5" stroke="#1c1b19" stroke-width="1.8" /><polygon points="636.0,565.1 649.1,576.7 649.1,581.7 636.0,570.1" fill="#4f4c47" stroke="#0a0a0a" stroke-width="1.15" stroke-linejoin="round" /><polygon points="649.1,576.7 662.3,568.6 662.3,573.6 649.1,581.7" fill="#57544e" stroke="#0a0a0a" stroke-width="1.15" stroke-linejoin="round" /><polygon points="636.0,565.1 649.1,576.7 662.3,568.6 649.1,557.1" fill="#85807a" stroke="#0a0a0a" stroke-width="1.15" stroke-linejoin="round" /><line x1="640.8" y1="566.6" x2="647.5" y2="572.6" stroke="#1c1b19" stroke-width="1.8" /><polygon points="652.0,579.3 665.3,591.0 665.3,596.0 652.0,584.3" fill="#4f4c47" stroke="#0a0a0a" stroke-width="1.15" stroke-linejoin="round" /><polygon points="665.3,591.0 678.5,582.8 678.5,587.8 665.3,596.0" fill="#57544e" stroke="#0a0a0a" stroke-width="1.15" stroke-linejoin="round" /><polygon points="652.0,579.3 665.3,591.0 678.5,582.8 665.2,571.2" fill="#85807a" stroke="#0a0a0a" stroke-width="1.15" stroke-linejoin="round" /><line x1="656.9" y1="580.8" x2="663.7" y2="586.8" stroke="#1c1b19" stroke-width="1.8" /><polygon points="668.2,593.6 689.9,612.7 689.9,617.7 668.2,598.6" fill="#4f4c47" stroke="#0a0a0a" stroke-width="1.15" stroke-linejoin="round" /><polygon points="689.9,612.7 703.3,604.5 703.3,609.5 689.9,617.7" fill="#57544e" stroke="#0a0a0a" stroke-width="1.15" stroke-linejoin="round" /><polygon points="668.2,593.6 689.9,612.7 703.3,604.5 681.5,585.4" fill="#85807a" stroke="#0a0a0a" stroke-width="1.15" stroke-linejoin="round" /><line x1="673.2" y1="595.2" x2="688.0" y2="608.2" stroke="#1c1b19" stroke-width="1.8" /><polygon points="459.3,437.0 481.5,456.9 481.5,461.9 459.3,442.0" fill="#4f4c47" stroke="#0a0a0a" stroke-width="1.15" stroke-linejoin="round" /><polygon points="481.5,456.9 494.3,449.5 494.3,454.5 481.5,461.9" fill="#57544e" stroke="#0a0a0a" stroke-width="1.15" stroke-linejoin="round" /><polygon points="459.3,437.0 481.5,456.9 494.3,449.5 472.0,429.7" fill="#85807a" stroke="#0a0a0a" stroke-width="1.15" stroke-linejoin="round" /><line x1="463.7" y1="438.4" x2="478.6" y2="451.7" stroke="#1c1b19" stroke-width="1.8" /><polygon points="484.1,459.2 495.9,469.8 495.9,474.8 484.1,464.2" fill="#4f4c47" stroke="#0a0a0a" stroke-width="1.15" stroke-linejoin="round" /><polygon points="495.9,469.8 508.7,462.3 508.7,467.3 495.9,474.8" fill="#57544e" stroke="#0a0a0a" stroke-width="1.15" stroke-linejoin="round" /><polygon points="484.1,459.2 495.9,469.8 508.7,462.3 496.9,451.8" fill="#85807a" stroke="#0a0a0a" stroke-width="1.15" stroke-linejoin="round" /><line x1="488.6" y1="460.6" x2="494.6" y2="466.0" stroke="#1c1b19" stroke-width="1.8" /><polygon points="498.5,472.1 510.4,482.8 510.4,487.8 498.5,477.1" fill="#4f4c47" stroke="#0a0a0a" stroke-width="1.15" stroke-linejoin="round" /><polygon points="510.4,482.8 523.3,475.2 523.3,480.2 510.4,487.8" fill="#57544e" stroke="#0a0a0a" stroke-width="1.15" stroke-linejoin="round" /><polygon points="498.5,472.1 510.4,482.8 523.3,475.2 511.4,464.6" fill="#85807a" stroke="#0a0a0a" stroke-width="1.15" stroke-linejoin="round" /><line x1="503.0" y1="473.5" x2="509.1" y2="479.0" stroke="#1c1b19" stroke-width="1.8" /><polygon points="513.1,485.2 525.1,495.9 525.1,500.9 513.1,490.2" fill="#4f4c47" stroke="#0a0a0a" stroke-width="1.15" stroke-linejoin="round" /><polygon points="525.1,495.9 538.1,488.3 538.1,493.3 525.1,500.9" fill="#57544e" stroke="#0a0a0a" stroke-width="1.15" stroke-linejoin="round" /><polygon points="513.1,485.2 525.1,495.9 538.1,488.3 526.0,477.6" fill="#85807a" stroke="#0a0a0a" stroke-width="1.15" stroke-linejoin="round" /><line x1="517.6" y1="486.6" x2="523.8" y2="492.1" stroke="#1c1b19" stroke-width="1.8" /><polygon points="527.8,498.3 540.0,509.2 540.0,514.2 527.8,503.3" fill="#4f4c47" stroke="#0a0a0a" stroke-width="1.15" stroke-linejoin="round" /><polygon points="540.0,509.2 553.0,501.5 553.0,506.5 540.0,514.2" fill="#57544e" stroke="#0a0a0a" stroke-width="1.15" stroke-linejoin="round" /><polygon points="527.8,498.3 540.0,509.2 553.0,501.5 540.8,490.7" fill="#85807a" stroke="#0a0a0a" stroke-width="1.15" stroke-linejoin="round" /><line x1="532.4" y1="499.8" x2="538.7" y2="505.4" stroke="#1c1b19" stroke-width="1.8" /><polygon points="542.7,511.7 555.1,522.7 555.1,527.7 542.7,516.7" fill="#4f4c47" stroke="#0a0a0a" stroke-width="1.15" stroke-linejoin="round" /><polygon points="555.1,522.7 568.1,514.9 568.1,519.9 555.1,527.7" fill="#57544e" stroke="#0a0a0a" stroke-width="1.15" stroke-linejoin="round" /><polygon points="542.7,511.7 555.1,522.7 568.1,514.9 555.8,504.0" fill="#85807a" stroke="#0a0a0a" stroke-width="1.15" stroke-linejoin="round" /><line x1="547.4" y1="513.2" x2="553.7" y2="518.8" stroke="#1c1b19" stroke-width="1.8" /><polygon points="557.8,525.2 570.3,536.3 570.3,541.3 557.8,530.2" fill="#4f4c47" stroke="#0a0a0a" stroke-width="1.15" stroke-linejoin="round" /><polygon points="570.3,536.3 583.4,528.5 583.4,533.5 570.3,541.3" fill="#57544e" stroke="#0a0a0a" stroke-width="1.15" stroke-linejoin="round" /><polygon points="557.8,525.2 570.3,536.3 583.4,528.5 570.9,517.4" fill="#85807a" stroke="#0a0a0a" stroke-width="1.15" stroke-linejoin="round" /><line x1="562.5" y1="526.7" x2="568.9" y2="532.4" stroke="#1c1b19" stroke-width="1.8" /><polygon points="573.1,538.8 585.7,550.1 585.7,555.1 573.1,543.8" fill="#4f4c47" stroke="#0a0a0a" stroke-width="1.15" stroke-linejoin="round" /><polygon points="585.7,550.1 598.9,542.2 598.9,547.2 585.7,555.1" fill="#57544e" stroke="#0a0a0a" stroke-width="1.15" stroke-linejoin="round" /><polygon points="573.1,538.8 585.7,550.1 598.9,542.2 586.2,531.0" fill="#85807a" stroke="#0a0a0a" stroke-width="1.15" stroke-linejoin="round" /><line x1="577.8" y1="540.3" x2="584.3" y2="546.1" stroke="#1c1b19" stroke-width="1.8" /><polygon points="588.5,552.6 601.3,564.1 601.3,569.1 588.5,557.6" fill="#4f4c47" stroke="#0a0a0a" stroke-width="1.15" stroke-linejoin="round" /><polygon points="601.3,564.1 614.5,556.1 614.5,561.1 601.3,569.1" fill="#57544e" stroke="#0a0a0a" stroke-width="1.15" stroke-linejoin="round" /><polygon points="588.5,552.6 601.3,564.1 614.5,556.1 601.7,544.7" fill="#85807a" stroke="#0a0a0a" stroke-width="1.15" stroke-linejoin="round" /><line x1="593.3" y1="554.2" x2="599.9" y2="560.0" stroke="#1c1b19" stroke-width="1.8" /><polygon points="604.2,566.6 617.1,578.2 617.1,583.2 604.2,571.6" fill="#4f4c47" stroke="#0a0a0a" stroke-width="1.15" stroke-linejoin="round" /><polygon points="617.1,578.2 630.4,570.1 630.4,575.1 617.1,583.2" fill="#57544e" stroke="#0a0a0a" stroke-width="1.15" stroke-linejoin="round" /><polygon points="604.2,566.6 617.1,578.2 630.4,570.1 617.4,558.6" fill="#85807a" stroke="#0a0a0a" stroke-width="1.15" stroke-linejoin="round" /><line x1="609.0" y1="568.2" x2="615.6" y2="574.1" stroke="#1c1b19" stroke-width="1.8" /><polygon points="620.0,580.8 633.1,592.5 633.1,597.5 620.0,585.8" fill="#4f4c47" stroke="#0a0a0a" stroke-width="1.15" stroke-linejoin="round" /><polygon points="633.1,592.5 646.4,584.3 646.4,589.3 633.1,597.5" fill="#57544e" stroke="#0a0a0a" stroke-width="1.15" stroke-linejoin="round" /><polygon points="620.0,580.8 633.1,592.5 646.4,584.3 633.3,572.7" fill="#85807a" stroke="#0a0a0a" stroke-width="1.15" stroke-linejoin="round" /><line x1="624.8" y1="582.3" x2="631.6" y2="588.3" stroke="#1c1b19" stroke-width="1.8" /><polygon points="636.0,595.1 669.7,625.2 669.7,630.2 636.0,600.1" fill="#4f4c47" stroke="#0a0a0a" stroke-width="1.15" stroke-linejoin="round" /><polygon points="669.7,625.2 683.1,616.9 683.1,621.9 669.7,630.2" fill="#57544e" stroke="#0a0a0a" stroke-width="1.15" stroke-linejoin="round" /><polygon points="636.0,595.1 669.7,625.2 683.1,616.9 649.3,586.9" fill="#85807a" stroke="#0a0a0a" stroke-width="1.15" stroke-linejoin="round" /><line x1="640.9" y1="596.7" x2="662.9" y2="616.3" stroke="#1c1b19" stroke-width="1.8" /><polygon points="440.0,448.1 465.6,471.4 465.6,476.4 440.0,453.1" fill="#4f4c47" stroke="#0a0a0a" stroke-width="1.15" stroke-linejoin="round" /><polygon points="465.6,471.4 478.5,463.9 478.5,468.9 465.6,476.4" fill="#57544e" stroke="#0a0a0a" stroke-width="1.15" stroke-linejoin="round" /><polygon points="440.0,448.1 465.6,471.4 478.5,463.9 452.8,440.8" fill="#85807a" stroke="#0a0a0a" stroke-width="1.15" stroke-linejoin="round" /><line x1="444.4" y1="449.5" x2="461.3" y2="464.8" stroke="#1c1b19" stroke-width="1.8" /><polygon points="468.2,473.7 480.0,484.4 480.0,489.4 468.2,478.7" fill="#4f4c47" stroke="#0a0a0a" stroke-width="1.15" stroke-linejoin="round" /><polygon points="480.0,484.4 492.9,476.8 492.9,481.8 480.0,489.4" fill="#57544e" stroke="#0a0a0a" stroke-width="1.15" stroke-linejoin="round" /><polygon points="468.2,473.7 480.0,484.4 492.9,476.8 481.2,466.2" fill="#85807a" stroke="#0a0a0a" stroke-width="1.15" stroke-linejoin="round" /><line x1="472.7" y1="475.1" x2="478.8" y2="480.6" stroke="#1c1b19" stroke-width="1.8" /><polygon points="482.6,486.8 494.5,497.5 494.5,502.5 482.6,491.8" fill="#4f4c47" stroke="#0a0a0a" stroke-width="1.15" stroke-linejoin="round" /><polygon points="494.5,497.5 507.5,489.9 507.5,494.9 494.5,502.5" fill="#57544e" stroke="#0a0a0a" stroke-width="1.15" stroke-linejoin="round" /><polygon points="482.6,486.8 494.5,497.5 507.5,489.9 495.6,479.2" fill="#85807a" stroke="#0a0a0a" stroke-width="1.15" stroke-linejoin="round" /><line x1="487.1" y1="488.2" x2="493.2" y2="493.7" stroke="#1c1b19" stroke-width="1.8" /><polygon points="497.1,499.9 509.2,510.8 509.2,515.8 497.1,504.9" fill="#4f4c47" stroke="#0a0a0a" stroke-width="1.15" stroke-linejoin="round" /><polygon points="509.2,510.8 522.2,503.1 522.2,508.1 509.2,515.8" fill="#57544e" stroke="#0a0a0a" stroke-width="1.15" stroke-linejoin="round" /><polygon points="497.1,499.9 509.2,510.8 522.2,503.1 510.2,492.3" fill="#85807a" stroke="#0a0a0a" stroke-width="1.15" stroke-linejoin="round" /><line x1="501.7" y1="501.4" x2="507.9" y2="507.0" stroke="#1c1b19" stroke-width="1.8" /><polygon points="511.9,513.3 524.0,524.3 524.0,529.3 511.9,518.3" fill="#4f4c47" stroke="#0a0a0a" stroke-width="1.15" stroke-linejoin="round" /><polygon points="524.0,524.3 537.1,516.5 537.1,521.5 524.0,529.3" fill="#57544e" stroke="#0a0a0a" stroke-width="1.15" stroke-linejoin="round" /><polygon points="511.9,513.3 524.0,524.3 537.1,516.5 524.9,505.6" fill="#85807a" stroke="#0a0a0a" stroke-width="1.15" stroke-linejoin="round" /><line x1="516.5" y1="514.7" x2="522.7" y2="520.4" stroke="#1c1b19" stroke-width="1.8" /><polygon points="526.7,526.7 539.1,537.9 539.1,542.9 526.7,531.7" fill="#4f4c47" stroke="#0a0a0a" stroke-width="1.15" stroke-linejoin="round" /><polygon points="539.1,537.9 552.2,530.1 552.2,535.1 539.1,542.9" fill="#57544e" stroke="#0a0a0a" stroke-width="1.15" stroke-linejoin="round" /><polygon points="526.7,526.7 539.1,537.9 552.2,530.1 539.9,519.0" fill="#85807a" stroke="#0a0a0a" stroke-width="1.15" stroke-linejoin="round" /><line x1="531.4" y1="528.2" x2="537.7" y2="533.9" stroke="#1c1b19" stroke-width="1.8" /><polygon points="541.8,540.4 554.3,551.7 554.3,556.7 541.8,545.4" fill="#4f4c47" stroke="#0a0a0a" stroke-width="1.15" stroke-linejoin="round" /><polygon points="554.3,551.7 567.5,543.8 567.5,548.8 554.3,556.7" fill="#57544e" stroke="#0a0a0a" stroke-width="1.15" stroke-linejoin="round" /><polygon points="541.8,540.4 554.3,551.7 567.5,543.8 555.0,532.5" fill="#85807a" stroke="#0a0a0a" stroke-width="1.15" stroke-linejoin="round" /><line x1="546.5" y1="541.9" x2="552.9" y2="547.7" stroke="#1c1b19" stroke-width="1.8" /><polygon points="557.0,554.2 569.6,565.6 569.6,570.6 557.0,559.2" fill="#4f4c47" stroke="#0a0a0a" stroke-width="1.15" stroke-linejoin="round" /><polygon points="569.6,565.6 582.9,557.6 582.9,562.6 569.6,570.6" fill="#57544e" stroke="#0a0a0a" stroke-width="1.15" stroke-linejoin="round" /><polygon points="557.0,554.2 569.6,565.6 582.9,557.6 570.3,546.3" fill="#85807a" stroke="#0a0a0a" stroke-width="1.15" stroke-linejoin="round" /><line x1="561.8" y1="555.7" x2="568.2" y2="561.6" stroke="#1c1b19" stroke-width="1.8" /><polygon points="572.5,568.2 585.2,579.7 585.2,584.7 572.5,573.2" fill="#4f4c47" stroke="#0a0a0a" stroke-width="1.15" stroke-linejoin="round" /><polygon points="585.2,579.7 598.5,571.6 598.5,576.6 585.2,584.7" fill="#57544e" stroke="#0a0a0a" stroke-width="1.15" stroke-linejoin="round" /><polygon points="572.5,568.2 585.2,579.7 598.5,571.6 585.7,560.2" fill="#85807a" stroke="#0a0a0a" stroke-width="1.15" stroke-linejoin="round" /><line x1="577.2" y1="569.7" x2="583.8" y2="575.6" stroke="#1c1b19" stroke-width="1.8" /><polygon points="588.1,582.3 601.0,594.0 601.0,599.0 588.1,587.3" fill="#4f4c47" stroke="#0a0a0a" stroke-width="1.15" stroke-linejoin="round" /><polygon points="601.0,594.0 614.3,585.8 614.3,590.8 601.0,599.0" fill="#57544e" stroke="#0a0a0a" stroke-width="1.15" stroke-linejoin="round" /><polygon points="588.1,582.3 601.0,594.0 614.3,585.8 601.4,574.2" fill="#85807a" stroke="#0a0a0a" stroke-width="1.15" stroke-linejoin="round" /><line x1="592.9" y1="583.9" x2="599.5" y2="589.8" stroke="#1c1b19" stroke-width="1.8" /><polygon points="603.9,596.6 616.9,608.4 616.9,613.4 603.9,601.6" fill="#4f4c47" stroke="#0a0a0a" stroke-width="1.15" stroke-linejoin="round" /><polygon points="616.9,608.4 630.3,600.2 630.3,605.2 616.9,613.4" fill="#57544e" stroke="#0a0a0a" stroke-width="1.15" stroke-linejoin="round" /><polygon points="603.9,596.6 616.9,608.4 630.3,600.2 617.2,588.4" fill="#85807a" stroke="#0a0a0a" stroke-width="1.15" stroke-linejoin="round" /><line x1="608.7" y1="598.2" x2="615.4" y2="604.2" stroke="#1c1b19" stroke-width="1.8" /><polygon points="619.8,611.1 649.4,637.8 649.4,642.8 619.8,616.1" fill="#4f4c47" stroke="#0a0a0a" stroke-width="1.15" stroke-linejoin="round" /><polygon points="649.4,637.8 662.9,629.5 662.9,634.5 649.4,642.8" fill="#57544e" stroke="#0a0a0a" stroke-width="1.15" stroke-linejoin="round" /><polygon points="619.8,611.1 649.4,637.8 662.9,629.5 633.3,602.8" fill="#85807a" stroke="#0a0a0a" stroke-width="1.15" stroke-linejoin="round" /><line x1="624.7" y1="612.7" x2="644.2" y2="630.3" stroke="#1c1b19" stroke-width="1.8" /><polygon points="420.5,459.3 442.5,479.5 442.5,484.5 420.5,464.3" fill="#4f4c47" stroke="#0a0a0a" stroke-width="1.15" stroke-linejoin="round" /><polygon points="442.5,479.5 455.5,471.9 455.5,476.9 442.5,484.5" fill="#57544e" stroke="#0a0a0a" stroke-width="1.15" stroke-linejoin="round" /><polygon points="420.5,459.3 442.5,479.5 455.5,471.9 433.4,451.9" fill="#85807a" stroke="#0a0a0a" stroke-width="1.15" stroke-linejoin="round" /><line x1="425.0" y1="460.7" x2="439.7" y2="474.2" stroke="#1c1b19" stroke-width="1.8" /><polygon points="445.1,481.8 456.8,492.5 456.8,497.5 445.1,486.8" fill="#4f4c47" stroke="#0a0a0a" stroke-width="1.15" stroke-linejoin="round" /><polygon points="456.8,492.5 469.8,484.9 469.8,489.9 456.8,497.5" fill="#57544e" stroke="#0a0a0a" stroke-width="1.15" stroke-linejoin="round" /><polygon points="445.1,481.8 456.8,492.5 469.8,484.9 458.1,474.3" fill="#85807a" stroke="#0a0a0a" stroke-width="1.15" stroke-linejoin="round" /><line x1="449.6" y1="483.2" x2="455.6" y2="488.7" stroke="#1c1b19" stroke-width="1.8" /><polygon points="459.4,494.9 600.6,624.5 600.6,629.5 459.4,499.9" fill="#4f4c47" stroke="#0a0a0a" stroke-width="1.15" stroke-linejoin="round" /><polygon points="600.6,624.5 614.1,616.2 614.1,621.2 600.6,629.5" fill="#57544e" stroke="#0a0a0a" stroke-width="1.15" stroke-linejoin="round" /><polygon points="459.4,494.9 600.6,624.5 614.1,616.2 472.4,487.3" fill="#85807a" stroke="#0a0a0a" stroke-width="1.15" stroke-linejoin="round" /><polygon points="603.5,627.2 629.0,650.5 629.0,655.5 603.5,632.2" fill="#4f4c47" stroke="#0a0a0a" stroke-width="1.15" stroke-linejoin="round" /><polygon points="629.0,650.5 642.5,642.1 642.5,647.1 629.0,655.5" fill="#57544e" stroke="#0a0a0a" stroke-width="1.15" stroke-linejoin="round" /><polygon points="603.5,627.2 629.0,650.5 642.5,642.1 617.1,618.9" fill="#85807a" stroke="#0a0a0a" stroke-width="1.15" stroke-linejoin="round" /><line x1="608.5" y1="628.8" x2="625.5" y2="644.4" stroke="#1c1b19" stroke-width="1.8" /><g filter="url(#blur5)" opacity="0.2"><polygon points="1064.0,627.0 1365.0,862.0 1556.0,700.0 1251.0,493.6" fill="#000"  /></g><path d="M1241.5 462.2Q1248.0 457.6 1254.6 462.1L1550.0 662.0Q1553.0 664.0 1553.0 667.6L1553.0 668.4Q1553.0 672.0 1550.3 674.3L1368.1 828.8Q1362.0 834.0 1355.7 829.1L1063.8 601.2Q1061.0 599.0 1061.0 595.4L1061.0 594.6Q1061.0 591.0 1063.9 588.9Z" fill="#62605a" stroke="#0a0a0a" stroke-width="1.2" stroke-linejoin="round"/><polygon points="1362.0,826.0 1553.0,664.0 1553.0,672.0 1362.0,834.0" fill="#5a5852"  /><path d="M1067.5 586.4Q1061.0 591.0 1067.3 595.9L1355.7 821.1Q1362.0 826.0 1368.1 820.8L1546.9 669.2Q1553.0 664.0 1546.4 659.5L1254.6 462.1Q1248.0 457.6 1241.5 462.2Z" fill="#7c776f" stroke="#0a0a0a" stroke-width="1.2" stroke-linejoin="round"/><line x1="1356.3" y1="821.6" x2="1356.3" y2="829.1" stroke="#0a0a0a" stroke-width="1" /><line x1="1367.5" y1="821.3" x2="1367.5" y2="828.8" stroke="#0a0a0a" stroke-width="1" /><path d="M1241.5 462.2Q1248.0 457.6 1254.6 462.1L1550.0 662.0Q1553.0 664.0 1553.0 667.6L1553.0 668.4Q1553.0 672.0 1550.3 674.3L1368.1 828.8Q1362.0 834.0 1355.7 829.1L1063.8 601.2Q1061.0 599.0 1061.0 595.4L1061.0 594.6Q1061.0 591.0 1063.9 588.9Z" fill="none" stroke="#0a0a0a" stroke-width="1.2" stroke-linejoin="round"/><path d="M1067.5 586.4Q1061.0 591.0 1067.3 595.9L1355.7 821.1Q1362.0 826.0 1368.1 820.8L1546.9 669.2Q1553.0 664.0 1546.4 659.5L1254.6 462.1Q1248.0 457.6 1241.5 462.2Z" fill="#7c776f" stroke="#0a0a0a" stroke-width="1.2" stroke-linejoin="round"/><polygon points="1077.7,591.1 1363.2,812.5 1538.9,664.1 1250.0,467.6" fill="none" stroke="#0a0a0a" stroke-width="1" stroke-linejoin="round" /><polygon points="1080.6,591.5 1362.3,809.9 1535.6,663.7 1250.4,469.7" fill="none" stroke="#2a2a2a" stroke-width="0.8" stroke-linejoin="round" /><clipPath id="basepk"><polygon points="1233.2,538.5 1303.0,587.8 1342.0,558.9 1443.4,628.6 1404.7,660.3 1445.3,689.2 1420.3,710.9 1443.3,727.9 1374.4,784.7 1139.1,606.7"/></clipPath><polygon points="1233.2,538.5 1303.0,587.8 1342.0,558.9 1443.4,628.6 1404.7,660.3 1445.3,689.2 1420.3,710.9 1443.3,727.9 1374.4,784.7 1139.1,606.7" fill="url(#wallg)"  /><g clip-path="url(#basepk)"><polygon points="1231.7,553.5 1301.5,602.8 1340.5,573.9 1441.9,643.6 1403.2,675.3 1443.8,704.2 1418.8,725.9 1441.8,742.9 1372.9,799.7 1137.6,621.7" fill="#726d66" stroke="#0a0a0a" stroke-width="1" stroke-linejoin="round" /></g><polygon points="1233.2,538.5 1303.0,587.8 1342.0,558.9 1443.4,628.6 1404.7,660.3 1445.3,689.2 1420.3,710.9 1443.3,727.9 1374.4,784.7 1139.1,606.7" fill="none" stroke="#0a0a0a" stroke-width="1" stroke-linejoin="round" /><clipPath id="baseslot"><polygon points="1096.2,580.3 1124.5,602.0 1187.8,555.8 1159.3,535.0"/></clipPath><polygon points="1096.2,580.3 1124.5,602.0 1187.8,555.8 1159.3,535.0" fill="#3f3d39"  /><g clip-path="url(#baseslot)"><polygon points="1095.2,589.3 1123.5,611.0 1186.8,564.8 1158.3,544.0" fill="#5a5650" stroke="#0a0a0a" stroke-width="1" stroke-linejoin="round" /></g><polygon points="1096.2,580.3 1124.5,602.0 1187.8,555.8 1159.3,535.0" fill="none" stroke="#0a0a0a" stroke-width="1" stroke-linejoin="round" /><polygon points="1112.6,579.5 1115.3,581.5 1132.6,569.1 1129.9,567.0" fill="#e8e8e8"  /><polygon points="1137.5,561.5 1140.3,563.6 1157.3,551.3 1154.6,549.3" fill="#e8e8e8"  /><clipPath id="baseslot2"><polygon points="1474.5,694.0 1481.2,698.7 1513.5,671.6 1506.8,667.0"/></clipPath><polygon points="1474.5,694.0 1481.2,698.7 1513.5,671.6 1506.8,667.0" fill="#3a3835"  /><g clip-path="url(#baseslot2)"><polygon points="1473.5,699.0 1480.2,703.7 1512.5,676.6 1505.8,672.0" fill="#4a4843" stroke="#0a0a0a" stroke-width="1" stroke-linejoin="round" /></g><polygon points="1474.5,694.0 1481.2,698.7 1513.5,671.6 1506.8,667.0" fill="none" stroke="#0a0a0a" stroke-width="1" stroke-linejoin="round" /><ellipse cx="1245.6" cy="483.2" rx="2.6" ry="1.9" fill="#e6e6e6" stroke="#0a0a0a" stroke-width="0.9"/><ellipse cx="1265.9" cy="486.2" rx="2.2" ry="1.6" fill="#5b5750" stroke="#0a0a0a" stroke-width="0.9"/><ellipse cx="1195.7" cy="537.1" rx="2.2" ry="1.6" fill="#5b5750" stroke="#0a0a0a" stroke-width="0.9"/><ellipse cx="1108.4" cy="599.6" rx="2.2" ry="1.6" fill="#5b5750" stroke="#0a0a0a" stroke-width="0.9"/><ellipse cx="1225.3" cy="687.3" rx="2.2" ry="1.6" fill="#5b5750" stroke="#0a0a0a" stroke-width="0.9"/><ellipse cx="1353.9" cy="785.3" rx="2.2" ry="1.6" fill="#5b5750" stroke="#0a0a0a" stroke-width="0.9"/><ellipse cx="1510.9" cy="654.9" rx="2.2" ry="1.6" fill="#5b5750" stroke="#0a0a0a" stroke-width="0.9"/><ellipse cx="1440.7" cy="713.0" rx="2.2" ry="1.6" fill="#5b5750" stroke="#0a0a0a" stroke-width="0.9"/><polygon points="1180.2,502.1 1186.2,506.3 1189.9,503.7 1183.9,499.5" fill="#7c776f"  /><g filter="url(#blur5)" opacity="0.26"><polygon points="1368.8,411.2 1468.2,474.4 1471.4,479.1 1470.3,486.4 1450.5,501.0 1349.5,436.4 1349.5,428.0 1353.1,422.3" fill="#000"  /></g><polygon points="1366.8,389.2 1466.2,452.4 1469.4,457.1 1468.3,464.4 1448.5,479.0 1347.5,414.4 1347.5,406.0 1351.1,400.3" fill="#5a5751" stroke="#0a0a0a" stroke-width="1.2" stroke-linejoin="round" /><polygon points="1466.2,452.4 1469.4,457.1 1468.3,464.4 1448.5,479.0 1450.1,468.5 1460.5,457.6" fill="#55524c" stroke="#0a0a0a" stroke-width="1" stroke-linejoin="round" /><polygon points="1348.0,406.0 1450.1,468.5 1448.5,479.0 1347.5,414.4" fill="#5a5751" stroke="#0a0a0a" stroke-width="1" stroke-linejoin="round" /><polygon points="1351.7,402.4 1453.2,464.9 1450.1,468.5 1348.0,406.0" fill="#6f6b63" stroke="#0a0a0a" stroke-width="0.9" stroke-linejoin="round" /><polygon points="1354.3,399.3 1455.8,462.3 1453.2,464.9 1351.7,402.4" fill="#2f2d2a" stroke="#0a0a0a" stroke-width="0.9" stroke-linejoin="round" /><polygon points="1361.0,394.1 1460.5,457.6 1455.8,462.3 1354.3,399.3" fill="#77726a" stroke="#0a0a0a" stroke-width="0.9" stroke-linejoin="round" /><polygon points="1366.8,389.2 1466.2,452.4 1460.5,457.6 1361.0,394.1" fill="#7d786f" stroke="#0a0a0a" stroke-width="1" stroke-linejoin="round" /><line x1="1364.2" y1="391.7" x2="1463.1" y2="455.2" stroke="#0a0a0a" stroke-width="1.4" /><g filter="url(#blur3)" opacity="0.22"><polygon points="1322.9,432.7 1325.0,419.2 1327.6,417.6 1332.8,420.7 1331.8,434.3 1330.2,435.8" fill="#000"  /></g><polygon points="1323.0,409.2 1328.8,412.3 1328.2,425.8 1320.9,422.7" fill="#55524c" stroke="#0a0a0a" stroke-width="1" stroke-linejoin="round" /><polygon points="1328.8,412.3 1330.8,410.7 1329.8,424.3 1328.2,425.8" fill="#4c4944" stroke="#0a0a0a" stroke-width="1" stroke-linejoin="round" /><polygon points="1323.0,409.2 1325.6,407.6 1330.8,410.7 1328.8,412.3" fill="#7a756d" stroke="#0a0a0a" stroke-width="1" stroke-linejoin="round" /><g filter="url(#blur3)" opacity="0.22"><polygon points="1351.6,451.5 1353.7,437.9 1356.3,436.4 1361.5,439.5 1360.4,453.0 1358.9,454.6" fill="#000"  /></g><polygon points="1351.7,427.9 1357.4,431.0 1356.9,444.6 1349.6,441.5" fill="#55524c" stroke="#0a0a0a" stroke-width="1" stroke-linejoin="round" /><polygon points="1357.4,431.0 1359.5,429.5 1358.4,443.0 1356.9,444.6" fill="#4c4944" stroke="#0a0a0a" stroke-width="1" stroke-linejoin="round" /><polygon points="1351.7,427.9 1354.3,426.4 1359.5,429.5 1357.4,431.0" fill="#7a756d" stroke="#0a0a0a" stroke-width="1" stroke-linejoin="round" /><g filter="url(#blur3)" opacity="0.22"><polygon points="1380.2,470.2 1382.3,456.7 1384.9,455.1 1390.1,458.2 1389.1,471.8 1387.5,473.3" fill="#000"  /></g><polygon points="1380.3,446.7 1386.0,449.8 1385.5,463.3 1378.2,460.2" fill="#55524c" stroke="#0a0a0a" stroke-width="1" stroke-linejoin="round" /><polygon points="1386.0,449.8 1388.1,448.2 1387.1,461.8 1385.5,463.3" fill="#4c4944" stroke="#0a0a0a" stroke-width="1" stroke-linejoin="round" /><polygon points="1380.3,446.7 1382.9,445.1 1388.1,448.2 1386.0,449.8" fill="#7a756d" stroke="#0a0a0a" stroke-width="1" stroke-linejoin="round" /><g filter="url(#blur10)" opacity="0.32"><polygon points="1545.0,556.0 1595.0,536.0 1635.0,576.0 1610.0,616.0 1545.0,601.0" fill="#000"  /></g><polygon points="1547.9,543.3 1583.1,564.0 1583.1,572.0 1547.9,551.3" fill="#55524c" stroke="#0a0a0a" stroke-width="1" stroke-linejoin="round" /><polygon points="1583.1,564.0 1598.2,553.9 1598.2,561.9 1583.1,572.0" fill="#4d4a45" stroke="#0a0a0a" stroke-width="1" stroke-linejoin="round" /><polygon points="1547.9,543.3 1583.1,564.0 1598.2,553.9 1563.5,529.9" fill="#6e6a62" stroke="#0a0a0a" stroke-width="1" stroke-linejoin="round" /><polygon points="1578.2,541.3 1614.5,563.2 1614.5,571.2 1578.2,549.3" fill="#55524c" stroke="#0a0a0a" stroke-width="1" stroke-linejoin="round" /><polygon points="1614.5,563.2 1629.1,552.5 1629.1,560.5 1614.5,571.2" fill="#4d4a45" stroke="#0a0a0a" stroke-width="1" stroke-linejoin="round" /><polygon points="1578.2,541.3 1614.5,563.2 1629.1,552.5 1593.3,528.5" fill="#6e6a62" stroke="#0a0a0a" stroke-width="1" stroke-linejoin="round" /><polygon points="1548.4,563.4 1583.6,585.8 1583.6,593.8 1548.4,571.4" fill="#55524c" stroke="#0a0a0a" stroke-width="1" stroke-linejoin="round" /><polygon points="1583.6,585.8 1599.2,575.8 1599.2,583.8 1583.6,593.8" fill="#4d4a45" stroke="#0a0a0a" stroke-width="1" stroke-linejoin="round" /><polygon points="1548.4,563.4 1583.6,585.8 1599.2,575.8 1564.0,552.3" fill="#6e6a62" stroke="#0a0a0a" stroke-width="1" stroke-linejoin="round" /><polygon points="1579.7,562.5 1614.4,584.9 1614.4,592.9 1579.7,570.5" fill="#55524c" stroke="#0a0a0a" stroke-width="1" stroke-linejoin="round" /><polygon points="1614.4,584.9 1630.5,573.8 1630.5,581.8 1614.4,592.9" fill="#4d4a45" stroke="#0a0a0a" stroke-width="1" stroke-linejoin="round" /><polygon points="1579.7,562.5 1614.4,584.9 1630.5,573.8 1594.8,551.3" fill="#6e6a62" stroke="#0a0a0a" stroke-width="1" stroke-linejoin="round" /><polygon points="1551.8,537.0 1581.6,554.5 1581.6,561.5 1551.8,544.0" fill="#5c5953" stroke="#0a0a0a" stroke-width="1" stroke-linejoin="round" /><polygon points="1581.6,554.5 1594.4,546.0 1594.4,553.0 1581.6,561.5" fill="#524f49" stroke="#0a0a0a" stroke-width="1" stroke-linejoin="round" /><polygon points="1551.8,537.0 1581.6,554.5 1594.4,546.0 1565.0,525.6" fill="#79746c" stroke="#0a0a0a" stroke-width="1" stroke-linejoin="round" /><polygon points="1582.1,535.1 1612.9,553.6 1612.9,560.6 1582.1,542.1" fill="#5c5953" stroke="#0a0a0a" stroke-width="1" stroke-linejoin="round" /><polygon points="1612.9,553.6 1625.2,544.6 1625.2,551.6 1612.9,560.6" fill="#524f49" stroke="#0a0a0a" stroke-width="1" stroke-linejoin="round" /><polygon points="1582.1,535.1 1612.9,553.6 1625.2,544.6 1594.9,524.2" fill="#79746c" stroke="#0a0a0a" stroke-width="1" stroke-linejoin="round" /><polygon points="1552.3,557.3 1582.1,576.3 1582.1,583.3 1552.3,564.3" fill="#5c5953" stroke="#0a0a0a" stroke-width="1" stroke-linejoin="round" /><polygon points="1582.1,576.3 1595.3,567.8 1595.3,574.8 1582.1,583.3" fill="#524f49" stroke="#0a0a0a" stroke-width="1" stroke-linejoin="round" /><polygon points="1552.3,557.3 1582.1,576.3 1595.3,567.8 1565.5,547.9" fill="#79746c" stroke="#0a0a0a" stroke-width="1" stroke-linejoin="round" /><polygon points="1583.5,556.4 1612.9,575.3 1612.9,582.3 1583.5,563.4" fill="#5c5953" stroke="#0a0a0a" stroke-width="1" stroke-linejoin="round" /><polygon points="1612.9,575.3 1626.6,565.9 1626.6,572.9 1612.9,582.3" fill="#524f49" stroke="#0a0a0a" stroke-width="1" stroke-linejoin="round" /><polygon points="1583.5,556.4 1612.9,575.3 1626.6,565.9 1596.3,546.9" fill="#79746c" stroke="#0a0a0a" stroke-width="1" stroke-linejoin="round" /><g filter="url(#blur5)" opacity="0.28"><polygon points="801.5,816.1 879.0,761.1 886.1,768.2 887.0,784.0 810.0,836.0 802.0,829.0" fill="#000"  /></g><polygon points="801.8,790.9 805.4,794.4 805.4,802.4 801.8,798.9" fill="#5f5b55" stroke="#0a0a0a" stroke-width="0.9" stroke-linejoin="round" /><polygon points="805.4,794.4 826.7,779.1 826.7,787.1 805.4,802.4" fill="#55524c" stroke="#0a0a0a" stroke-width="0.9" stroke-linejoin="round" /><polygon points="801.8,790.9 805.4,794.4 826.7,779.1 823.1,776.1" fill="#77726a" stroke="#0a0a0a" stroke-width="0.9" stroke-linejoin="round" /><polygon points="840.9,763.7 844.4,767.2 844.4,775.2 840.9,771.7" fill="#5f5b55" stroke="#0a0a0a" stroke-width="0.9" stroke-linejoin="round" /><polygon points="844.4,767.2 865.7,751.8 865.7,759.8 844.4,775.2" fill="#55524c" stroke="#0a0a0a" stroke-width="0.9" stroke-linejoin="round" /><polygon points="840.9,763.7 844.4,767.2 865.7,751.8 861.0,748.9" fill="#77726a" stroke="#0a0a0a" stroke-width="0.9" stroke-linejoin="round" /><polygon points="799.5,802.1 806.6,807.5 807.8,818.7 800.0,813.0" fill="#66625b" stroke="#0a0a0a" stroke-width="1" stroke-linejoin="round" /><polygon points="806.6,807.5 884.1,754.2 884.1,764.3 807.8,818.7" fill="#57534c" stroke="#0a0a0a" stroke-width="1" stroke-linejoin="round" /><polygon points="799.5,802.1 877.0,747.1 884.1,754.2 806.6,807.5" fill="#7e796f" stroke="#0a0a0a" stroke-width="1" stroke-linejoin="round" /><g filter="url(#blur5)" opacity="0.3"><polygon points="837.0,845.1 913.3,790.1 928.1,802.5 928.1,814.4 851.2,870.6 837.0,858.1" fill="#000"  /></g><polygon points="835.0,831.1 848.0,844.1 849.2,856.6 835.0,844.1" fill="#66625b" stroke="#0a0a0a" stroke-width="1" stroke-linejoin="round" /><polygon points="848.0,844.1 926.1,788.5 926.1,800.4 849.2,856.6" fill="#57534c" stroke="#0a0a0a" stroke-width="1" stroke-linejoin="round" /><polygon points="835.0,831.1 911.3,776.1 926.1,788.5 848.0,844.1" fill="#858077" stroke="#0a0a0a" stroke-width="1" stroke-linejoin="round" /><g filter="url(#blur5)" opacity="0.22"><polygon points="1192.9,938.1 1233.0,905.3 1239.3,910.6 1237.7,925.5 1197.9,958.3 1191.3,953.7" fill="#000"  /></g><polygon points="1190.9,926.1 1197.6,930.7 1195.9,946.3 1189.3,941.7" fill="#66625b" stroke="#0a0a0a" stroke-width="1" stroke-linejoin="round" /><polygon points="1197.6,930.7 1237.3,898.6 1235.7,913.5 1195.9,946.3" fill="#57534c" stroke="#0a0a0a" stroke-width="1" stroke-linejoin="round" /><polygon points="1190.9,926.1 1231.0,893.3 1237.3,898.6 1197.6,930.7" fill="#858077" stroke="#0a0a0a" stroke-width="1" stroke-linejoin="round" />
</svg>
<div class="a" style="left:0px;top:0px;width:1928px;height:8px;background:#000"></div><div class="a" style="left:1920px;top:0px;width:8px;height:26px;background:#1f1f1f"></div><div class="a" style="left:1920px;top:26px;width:8px;height:920px;background:#000"></div><div class="a" style="left:1920px;top:946px;width:8px;height:110px;background:#f0f0f0"></div><div class="a" style="left:0px;top:8px;width:1920px;height:23px;background:#fff"></div><svg class="a" style="left:3px;top:11px" width="15" height="17" viewBox="0 0 15 17" ><path d="M2 0h9l4 3v13H2a2 2 0 0 1-2-2V2a2 2 0 0 1 2-2z" fill="#f07a22"/><rect x="0" y="12" width="15" height="5" rx="1" fill="#a4471b"/><text x="4.5" y="10" font-size="9" font-weight="bold" fill="#fff" font-family="Liberation Sans">F</text></svg><div class="a" style="left:23px;top:13.5px;font-size:12.5px;line-height:1;color:#1a1a1a;font-weight:normal;white-space:nowrap;transform:scaleX(0.926);transform-origin:0 0;">Autodesk Fusion 360 (個人用 - 商用利用不可)</div><div class="a" style="left:1799px;top:18px;width:11px;height:1px;background:#111"></div><svg class="a" style="left:1843px;top:12px" width="12" height="12" viewBox="0 0 12 12" ><rect x="0.5" y="2.5" width="8" height="8" fill="none" stroke="#111"/><path d="M2.5 2.5V0.5h8v8h-2" fill="none" stroke="#111"/></svg><svg class="a" style="left:1889px;top:12px" width="12" height="12" viewBox="0 0 12 12" ><path d="M0.5 0.5L11 11M11 0.5L0.5 11" stroke="#111" stroke-width="1.1"/></svg><div class="a" style="left:0px;top:31px;width:1920px;height:32px;background:#cbcbcb"></div><svg class="a" style="left:9px;top:40px" width="14" height="14" viewBox="0 0 14 14" ><rect x="0" y="0" width="3.6" height="3.6" fill="#6a6a6a"/><rect x="0" y="5" width="3.6" height="3.6" fill="#6a6a6a"/><rect x="0" y="10" width="3.6" height="3.6" fill="#6a6a6a"/><rect x="5" y="0" width="3.6" height="3.6" fill="#6a6a6a"/><rect x="5" y="5" width="3.6" height="3.6" fill="#6a6a6a"/><rect x="5" y="10" width="3.6" height="3.6" fill="#6a6a6a"/><rect x="10" y="0" width="3.6" height="3.6" fill="#6a6a6a"/><rect x="10" y="5" width="3.6" height="3.6" fill="#6a6a6a"/><rect x="10" y="10" width="3.6" height="3.6" fill="#6a6a6a"/></svg><svg class="a" style="left:42px;top:39px" width="14" height="16" viewBox="0 0 14 16" ><path d="M0 0h9l4 4v12H0z" fill="#6a6a6a"/><path d="M9 0v4h4" fill="#c9c9c9" opacity=".6"/></svg><svg class="a" style="left:61px;top:44px" width="7" height="5" viewBox="0 0 7 5" ><path d="M0 0h7L3.5 4.5z" fill="#6a6a6a"/></svg><svg class="a" style="left:87px;top:40px" width="14" height="14" viewBox="0 0 14 14" ><path d="M0 1a1 1 0 0 1 1-1h10l3 3v10a1 1 0 0 1-1 1H1a1 1 0 0 1-1-1z" fill="#6a6a6a"/><rect x="3" y="1.5" width="7" height="3" fill="#c9c9c9"/><rect x="3" y="8" width="8" height="6" fill="#c9c9c9"/><rect x="4.5" y="9.5" width="5" height="4.5" fill="#6a6a6a"/></svg><svg class="a" style="left:120px;top:41px" width="14" height="14" viewBox="0 0 14 14" ><path d="M4 3.5h4.5a4.5 4.5 0 0 1 4.5 4.5v5" fill="none" stroke="#6a6a6a" stroke-width="2"/><path d="M0 3.5L5 0v7z" fill="#6a6a6a"/></svg><svg class="a" style="left:140px;top:44px" width="7" height="5" viewBox="0 0 7 5" ><path d="M0 0h7L3.5 4.5z" fill="#6a6a6a"/></svg><svg class="a" style="left:160px;top:41px" width="14" height="14" viewBox="0 0 14 14" ><path d="M10 3.5H5.5A4.5 4.5 0 0 0 1 8v5" fill="none" stroke="#9a9a9a" stroke-width="2"/><path d="M14 3.5L9 0v7z" fill="#9a9a9a"/></svg><svg class="a" style="left:179px;top:44px" width="7" height="5" viewBox="0 0 7 5" ><path d="M0 0h7L3.5 4.5z" fill="#9a9a9a"/></svg><div class="a" style="left:193px;top:35px;width:1478px;height:28px;background:#f1f1f1;border-radius:4px 4px 0 0"></div><svg class="a" style="left:892px;top:41px" width="16" height="16" viewBox="0 0 16 16" ><path d="M0 2.5L8 0l8 2.5v9L8 15.5 0 11.5z" fill="#6d6d6d"/><path d="M0 2.5L8 5v10.5L0 11.5z" fill="#b8b8b8"/><path d="M8 5l8-2.5v9L8 15.5z" fill="#666"/></svg><div class="a" style="left:913px;top:43.5px;font-size:12px;line-height:1;color:#1a1a1a;font-weight:normal;white-space:nowrap;">V-8 v29*</div><svg class="a" style="left:1655px;top:43px" width="10" height="10" viewBox="0 0 10 10" ><path d="M0.5 0.5L9.5 9.5M9.5 0.5L0.5 9.5" stroke="#666" stroke-width="1.2"/></svg><div class="a" style="left:1675px;top:35px;width:28px;height:28px;background:#b9b9b9;border-radius:4px 4px 0 0"></div><svg class="a" style="left:1683px;top:42px" width="14" height="14" viewBox="0 0 14 14" ><path d="M7 0v14M0 7h14" stroke="#6a6a6a" stroke-width="2.2"/></svg><svg class="a" style="left:1715px;top:39px" width="16" height="17" viewBox="0 0 16 17" ><path d="M0 0h9l3 3v7l-4 4-1 3H0z" fill="#6a6a6a"/><path d="M14 5l2 2-7 8-3 1 1-3z" fill="#6a6a6a"/></svg><div class="a" style="left:1734px;top:42.5px;font-size:12px;line-height:1;color:#333;font-weight:normal;white-space:nowrap;transform:scaleX(0.913);transform-origin:0 0;">6/10</div><svg class="a" style="left:1780px;top:39px" width="17" height="17" viewBox="0 0 17 17" ><circle cx="8.5" cy="8.5" r="7.8" fill="none" stroke="#6a6a6a" stroke-width="1.1"/><circle cx="8.5" cy="8.5" r="6" fill="#6a6a6a"/><path d="M8.5 4.5v4.5h3.5" fill="none" stroke="#c9c9c9" stroke-width="1.3"/></svg><svg class="a" style="left:1814px;top:38px" width="16" height="18" viewBox="0 0 16 18" ><path d="M7 2.5a4.5 4.5 0 0 1 4.5 4.5v5l2.5 2.5H0l2.5-2.5V7A4.5 4.5 0 0 1 7 2.5z" fill="#6a6a6a"/><path d="M5 15.5h4L7 17z" fill="#6a6a6a"/><circle cx="11.5" cy="3.8" r="3" fill="#1a95e0"/></svg><svg class="a" style="left:1846px;top:39px" width="17" height="17" viewBox="0 0 17 17" ><circle cx="8.5" cy="8.5" r="8" fill="#6a6a6a"/><path d="M5.8 6.3a2.7 2.7 0 1 1 3.7 2.5c-.8.4-1 .8-1 1.7" fill="none" stroke="#fff" stroke-width="2"/><circle cx="8.5" cy="13" r="1.2" fill="#fff"/></svg><svg class="a" style="left:1883px;top:35px" width="24" height="24" viewBox="0 0 24 24" ><defs><linearGradient id="av" x1="0" y1="0" x2="0" y2="1"><stop offset="0" stop-color="#c6d0dc"/><stop offset="1" stop-color="#8c9bb0"/></linearGradient></defs><circle cx="12" cy="12" r="12" fill="url(#av)"/><path d="M12 3.5c3.3 0 5 2.5 5 5.5 0 2.2-1 4-2.2 5v1.2l5.5 2.8A12 12 0 0 1 3.7 18l5.5-2.8V14C8 13 7 11.2 7 9c0-3 1.7-5.5 5-5.5z" fill="#56647a"/></svg><div class="a" style="left:0px;top:63px;width:1920px;height:81px;background:#f1f1f1"></div><div class="a" style="left:0px;top:144px;width:1920px;height:1px;background:#d6d6d6"></div><div class="a" style="left:12px;top:74px;width:109px;height:60px;border:1px solid #d2d2d2;border-radius:4px;background:#f0f0f0"></div><div class="a" style="left:41px;top:97.5px;font-size:11px;line-height:1;color:#222;font-weight:bold;white-space:nowrap;transform:scaleX(0.818);transform-origin:0 0;">デザイン</div><svg class="a" style="left:85px;top:102px" width="7" height="5" viewBox="0 0 7 5" ><path d="M0 0h7L3.5 4.5z" fill="#222"/></svg><div class="a" style="left:149px;top:68px;font-size:10.5px;line-height:1;color:#0696d7;font-weight:bold;white-space:nowrap;transform:scaleX(0.750);transform-origin:0 0;">ソリッド</div><div class="a" style="left:138px;top:84px;width:57px;height:3px;background:#0696d7;border-radius:1px"></div><div class="a" style="left:228px;top:68px;font-size:10.5px;line-height:1;color:#333;font-weight:normal;white-space:nowrap;transform:scaleX(0.709);transform-origin:0 0;">サーフェス</div><div class="a" style="left:315px;top:68px;font-size:10.5px;line-height:1;color:#333;font-weight:normal;white-space:nowrap;transform:scaleX(0.659);transform-origin:0 0;">メッシュ</div><div class="a" style="left:388px;top:68px;font-size:10.5px;line-height:1;color:#333;font-weight:normal;white-space:nowrap;transform:scaleX(0.727);transform-origin:0 0;">フォーム</div><div class="a" style="left:466px;top:68px;font-size:10.5px;line-height:1;color:#333;font-weight:normal;white-space:nowrap;transform:scaleX(0.783);transform-origin:0 0;">シート メタル</div><div class="a" style="left:564px;top:68px;font-size:10.5px;line-height:1;color:#333;font-weight:normal;white-space:nowrap;transform:scaleX(0.697);transform-origin:0 0;">プラスチック</div><div class="a" style="left:657px;top:68px;font-size:10.5px;line-height:1;color:#333;font-weight:normal;white-space:nowrap;transform:scaleX(0.688);transform-origin:0 0;">ユーティリティ</div><div class="a" style="left:351px;top:90px;width:1px;height:50px;background:#d8d8d8"></div><div class="a" style="left:620px;top:90px;width:1px;height:50px;background:#d8d8d8"></div><div class="a" style="left:717px;top:90px;width:1px;height:50px;background:#d8d8d8"></div><div class="a" style="left:775px;top:90px;width:1px;height:50px;background:#d8d8d8"></div><div class="a" style="left:835px;top:90px;width:1px;height:50px;background:#d8d8d8"></div><div class="a" style="left:894px;top:90px;width:1px;height:50px;background:#d8d8d8"></div><div class="a" style="left:220px;top:129.5px;font-size:10.5px;line-height:1;color:#333;font-weight:normal;white-space:nowrap;">作成</div><svg class="a" style="left:244px;top:132.5px" width="7" height="5" viewBox="0 0 7 5" ><path d="M0 0h7L3.5 4.5z" fill="#222"/></svg><div class="a" style="left:468px;top:129.5px;font-size:10.5px;line-height:1;color:#333;font-weight:normal;white-space:nowrap;">修正</div><svg class="a" style="left:492px;top:132.5px" width="7" height="5" viewBox="0 0 7 5" ><path d="M0 0h7L3.5 4.5z" fill="#222"/></svg><div class="a" style="left:643px;top:129.5px;font-size:10.5px;line-height:1;color:#333;font-weight:normal;white-space:nowrap;transform:scaleX(0.727);transform-origin:0 0;">アセンブリ</div><svg class="a" style="left:685px;top:132.5px" width="7" height="5" viewBox="0 0 7 5" ><path d="M0 0h7L3.5 4.5z" fill="#222"/></svg><div class="a" style="left:731px;top:129.5px;font-size:10.5px;line-height:1;color:#333;font-weight:normal;white-space:nowrap;">構築</div><svg class="a" style="left:755px;top:132.5px" width="7" height="5" viewBox="0 0 7 5" ><path d="M0 0h7L3.5 4.5z" fill="#222"/></svg><div class="a" style="left:790px;top:129.5px;font-size:10.5px;line-height:1;color:#333;font-weight:normal;white-space:nowrap;">検査</div><svg class="a" style="left:814px;top:132.5px" width="7" height="5" viewBox="0 0 7 5" ><path d="M0 0h7L3.5 4.5z" fill="#222"/></svg><div class="a" style="left:849px;top:129.5px;font-size:10.5px;line-height:1;color:#333;font-weight:normal;white-space:nowrap;">挿入</div><svg class="a" style="left:873px;top:132.5px" width="7" height="5" viewBox="0 0 7 5" ><path d="M0 0h7L3.5 4.5z" fill="#222"/></svg><div class="a" style="left:907px;top:129.5px;font-size:10.5px;line-height:1;color:#333;font-weight:normal;white-space:nowrap;">選択</div><svg class="a" style="left:932px;top:132.5px" width="7" height="5" viewBox="0 0 7 5" ><path d="M0 0h7L3.5 4.5z" fill="#222"/></svg><svg class="a" style="left:137px;top:90px" width="33" height="33" viewBox="0 0 33 33" ><rect x="1.5" y="1.5" width="27" height="27" fill="none" stroke="#555" stroke-width="1.1"/><rect x="0" y="0" width="3" height="3" fill="#555"/><rect x="27" y="0" width="3" height="3" fill="#555"/><rect x="0" y="27" width="3" height="3" fill="#555"/><path d="M8 8h14M8 8v12M8 20c8 0 13-5 14-12" fill="none" stroke="#555" stroke-width="1"/><rect x="6.5" y="6.5" width="3" height="3" fill="#555"/><rect x="20.5" y="6.5" width="3" height="3" fill="#555"/><rect x="6.5" y="19" width="3" height="3" fill="#555"/><path d="M25 18v14M18 25h14" stroke="#1ea34a" stroke-width="3.6"/></svg><svg class="a" style="left:181px;top:90px" width="32" height="32" viewBox="0 0 32 32" ><path d="M1 6l5-6h18l-5 6z" fill="#8ec9f5"/><rect x="1" y="6" width="18" height="22" fill="#6cb0e6"/><path d="M19 6l5-6v22l-5 6z" fill="#4a94d0"/><path d="M1 28h18v4H1z" fill="#b9b9b9"/><path d="M19 28l5-6v4l-5 6z" fill="#999"/><path d="M28 4v24" stroke="#222" stroke-width="1.2"/><path d="M25.5 7L28 2l2.5 5z" fill="#222"/></svg><svg class="a" style="left:223px;top:90px" width="33" height="33" viewBox="0 0 33 33" ><path d="M3 7c6-6 18-6 24 0" fill="none" stroke="#333" stroke-width="1.1"/><path d="M1 8l5-4 0 5z" fill="#333"/><path d="M1 14c8-6 20-6 25-1l-1 6c-6-4-16-4-23 1z" fill="#8ec9f5"/><path d="M2 20c7-5 17-5 23-1l1 9c-6-4-17-4-23 1z" fill="#6cb0e6"/><path d="M1 14l1 6 1 9-2-4z" fill="#4a94d0"/><path d="M26 13l6 2v9l-6 4z" fill="#fff" stroke="#333" stroke-width="1"/></svg><svg class="a" style="left:266px;top:90px" width="33" height="33" viewBox="0 0 33 33" ><path d="M1 6l6-6h25l-6 6z" fill="#ececec" stroke="#666" stroke-width="1"/><rect x="1" y="6" width="25" height="26" fill="#e0e0e0" stroke="#666" stroke-width="1"/><path d="M26 6l6-6v25l-6 7z" fill="#b9b9b9" stroke="#666" stroke-width="1"/><circle cx="12.5" cy="19" r="8" fill="#e0e0e0" stroke="#555" stroke-width="1.2"/><path d="M6 19a6.5 6.5 0 0 0 13 0 6 6 0 0 0-1-3.5 6.5 6.5 0 0 1-7.5-6.3A6.5 6.5 0 0 0 6 19z" fill="#6cb0e6"/></svg><svg class="a" style="left:309px;top:90px" width="30" height="30" viewBox="0 0 30 30" ><rect x="1" y="2" width="6" height="6" fill="#fff" stroke="#555" stroke-width="1"/><rect x="22" y="2" width="6" height="6" fill="#6cb0e6"/><rect x="1" y="22" width="6" height="6" fill="#6cb0e6"/><rect x="22" y="22" width="6" height="6" fill="#6cb0e6"/><path d="M7 5h15M4 8v14M7 25h15" stroke="#555" stroke-width="1"/></svg><svg class="a" style="left:363px;top:90px" width="32" height="32" viewBox="0 0 32 32" ><path d="M1 4l3-3h5v31H1z" fill="#e0e0e0" stroke="#555" stroke-width=".9"/><path d="M8 4l3-3h6l-3 3z" fill="#8ec9f5"/><rect x="7" y="4" width="8" height="28" fill="#6cb0e6"/><path d="M15 4l3-3v27l-3 4z" fill="#4a94d0"/><path d="M17 16h12" stroke="#222" stroke-width="1.2"/><path d="M27 13l4 3-4 3z" fill="#222"/></svg><svg class="a" style="left:405px;top:90px" width="33" height="33" viewBox="0 0 33 33" ><path d="M1 8l7-7h8c9 0 16 7 16 16v8l-7 7H1z" fill="#dedede" stroke="#555" stroke-width=".9"/><path d="M16 1c9 0 16 7 16 16l-6 6c0-9-6-15-13-15z" fill="#6cb0e6"/><path d="M26 23l6-6v8l-6 7z" fill="#b9b9b9"/></svg><svg class="a" style="left:448px;top:90px" width="33" height="33" viewBox="0 0 33 33" ><path d="M1 7l6-6h25l-6 6z" fill="#ededed" stroke="#555" stroke-width=".9"/><rect x="1" y="7" width="25" height="25" fill="#e3e3e3" stroke="#555" stroke-width=".9"/><path d="M26 7l6-6v25l-6 6z" fill="#b9b9b9" stroke="#555" stroke-width=".9"/><rect x="5" y="11" width="17" height="17" fill="#f3f3f3"/><path d="M5 11h5v12h12v5H5z" fill="#4a94d0"/><path d="M10 23l12-0v5H5z" fill="#8ec9f5"/></svg><svg class="a" style="left:491px;top:90px" width="33" height="33" viewBox="0 0 33 33" ><path d="M1 14l4-4h9v22H1z" fill="#8ec9f5"/><path d="M11 4l4-4h17l-4 4z" fill="#8ec9f5"/><path d="M11 4h17v18H11z" fill="#6cb0e6"/><path d="M28 4l4-4v18l-4 4z" fill="#4a94d0"/><path d="M14 22h8v10H14z" fill="#6cb0e6"/><path d="M1 14h13v18H1z" fill="#6cb0e6"/><path d="M14 22h8l-8 10z" fill="#4a94d0"/></svg><svg class="a" style="left:534px;top:90px" width="33" height="33" viewBox="0 0 33 33" ><path d="M1 5l4-4h25l-4 4z" fill="#8ec9f5"/><rect x="1" y="5" width="25" height="11" fill="#6cb0e6"/><path d="M26 5l4-4v11l-4 4z" fill="#4a94d0"/><path d="M0 18h26l5-5" fill="none" stroke="#1a8ee0" stroke-width="1.3"/><rect x="1" y="21" width="25" height="10" fill="#e3e3e3" stroke="#555" stroke-width=".9"/><path d="M26 21l4-4v10l-4 4z" fill="#b9b9b9"/></svg><svg class="a" style="left:578px;top:90px" width="32" height="32" viewBox="0 0 32 32" ><path d="M16 2v28M2 16h28" stroke="#333" stroke-width="2.4"/><path d="M16 0l5 6H11zM16 32l5-6H11zM0 16l6-5v10zM32 16l-6-5v10z" fill="#333"/></svg><svg class="a" style="left:631px;top:90px" width="33" height="33" viewBox="0 0 33 33" ><path d="M1 12l3-3h9l-3 3z" fill="#8ec9f5"/><rect x="1" y="12" width="10" height="10" fill="#6cb0e6"/><path d="M11 12l3-3v10l-3 3z" fill="#4a94d0"/><rect x="1" y="22" width="12" height="10" fill="#e2e2e2" stroke="#666" stroke-width=".8"/><rect x="13" y="22" width="12" height="10" fill="#e2e2e2" stroke="#666" stroke-width=".8"/><path d="M13 22l3-3h12l-3 3z" fill="#eee" stroke="#666" stroke-width=".8"/><path d="M25 22l3-3v10l-3 3z" fill="#b9b9b9" stroke="#666" stroke-width=".8"/><path d="M23 0l1.5 5 4.5-2.5-2.5 4.5 5 1.5-5 1.5 2.5 4.5-4.5-2.5L23 17l-1.5-5-4.5 2.5 2.5-4.5-5-1.5 5-1.5L17 2.5l4.5 2.5z" fill="#f5a100"/></svg><svg class="a" style="left:676px;top:90px" width="30" height="30" viewBox="0 0 30 30" ><path d="M2 8c0-5 3-6 5-6h2c2 0 3 2 3 4v14l-5 6-4 2c-1-1-1-2-1-3z" fill="#dcdcdc" stroke="#555" stroke-width=".9"/><path d="M17 14l3-1h3l4 4v13l-4-3h-6z" fill="#d0d0d0" stroke="#555" stroke-width=".9"/><path d="M15 8v6M8 14v6" stroke="#1a8ee0" stroke-width="1.1"/></svg><svg class="a" style="left:731px;top:90px" width="32" height="32" viewBox="0 0 32 32" ><path d="M1 8l7-7h3l-7 7z" fill="#ececec" stroke="#555" stroke-width=".9"/><rect x="1" y="8" width="8" height="24" fill="#e0e0e0" stroke="#555" stroke-width=".9"/><path d="M9 8l7-7v24l-7 7z" fill="#5cc46e"/><path d="M21 9l9-7v23l-9 7z" fill="#e59a6a"/></svg><svg class="a" style="left:790px;top:96px" width="30" height="22" viewBox="0 0 30 22" ><path d="M1 1v9M29 1v9M1 5.5h28" stroke="#333" stroke-width="1"/><path d="M1 5.5l4-2.5v5zM29 5.5l-4-2.5v5z" fill="#333"/><rect x="1" y="12" width="28" height="6" fill="#f5a100"/><path d="M4 12v2M8 12v1.5M12 12v2M16 12v1.5M20 12v2M24 12v1.5" stroke="#a86a00" stroke-width=".8"/></svg><svg class="a" style="left:849px;top:91px" width="30" height="30" viewBox="0 0 30 30" ><rect x="0" y="0" width="29" height="29" fill="#8ccaf3"/><path d="M0 29V17c4-5 8-6 12-2s6 6 9 3 5-2 8 1v10z" fill="#3f8fcf"/><circle cx="21" cy="8" r="3" fill="#fdf2b4"/><rect x=".5" y=".5" width="28" height="28" fill="none" stroke="#3f8fcf"/></svg><div class="a" style="left:905px;top:87px;width:38px;height:38px;background:#0696d7"></div><svg class="a" style="left:905px;top:87px" width="38" height="38" viewBox="0 0 38 38" ><circle cx="17" cy="18" r="11" fill="none" stroke="#3fc06a" stroke-width="1.2" stroke-dasharray="2.5 2"/><path d="M25 18v12l3-3 2.5 5 2-1-2.5-5h4z" fill="#fff" stroke="#222" stroke-width=".8"/></svg><div class="a" style="left:4px;top:149px;width:300px;height:25px;background:#f0f0f0;border:1px solid #c9c9c9"></div><svg class="a" style="left:9px;top:156px" width="11" height="8" viewBox="0 0 11 8" ><path d="M5 0L0 4l5 4zM10.5 0L5.5 4l5 4z" fill="#222"/></svg><div class="a" style="left:28px;top:155px;font-size:10.5px;line-height:1;color:#444;font-weight:normal;white-space:nowrap;transform:scaleX(0.727);transform-origin:0 0;">ブラウザ</div><svg class="a" style="left:282px;top:155px" width="11" height="11" viewBox="0 0 11 11" ><circle cx="5.5" cy="5.5" r="5.5" fill="#222"/><rect x="2.5" y="4.8" width="6" height="1.6" fill="#fff"/></svg><div class="a" style="left:299px;top:155px;width:1px;height:11px;background:#888"></div><div class="a" style="left:301px;top:157px;width:1px;height:7px;background:#888"></div><div class="a" style="left:8px;top:179px;width:6px;height:817px;background:#c4c4c8;border-radius:3px"></div><div class="a" style="left:8px;top:179px;width:6px;height:190px;background:#9c9c9c;border-radius:3px"></div><svg class="a" style="left:20px;top:182px" width="12" height="12" viewBox="0 0 12 12" ><defs><linearGradient id="tg" x1="0" y1="0" x2="1" y2="1"><stop offset="0" stop-color="#fff"/><stop offset="1" stop-color="#777"/></linearGradient></defs><path d="M11 1v10H1z" fill="url(#tg)" stroke="#222" stroke-width="1"/></svg><div class="a" style="left:40px;top:179px;width:132px;height:19.5px;background:rgba(240,240,240,.96)"></div><svg class="a" style="left:42px;top:182px" width="16" height="12" viewBox="0 0 16 12" ><path d="M0.5 6C3 2 5.5 1 8 1s5 1 7.5 5C13 10 10.5 11 8 11S3 10 0.5 6z" fill="#9a9a9a"/><circle cx="8" cy="6" r="3" fill="#f0f0f0"/><circle cx="8" cy="6" r="1.8" fill="#9a9a9a"/></svg><div class="a" style="left:65px;top:181px;width:82px;height:16px;background:#9b9b9b"></div><svg class="a" style="left:67px;top:181px" width="17" height="16" viewBox="0 0 17 16" ><defs><linearGradient id="cb" x1="0" y1="0" x2="1" y2="1"><stop offset="0" stop-color="#f4f6fa"/><stop offset="1" stop-color="#c9ccd4"/></linearGradient></defs><path d="M1 4l3-3h11v11l-3 3.5H1z" fill="url(#cb)" stroke="#222" stroke-width="1"/><path d="M1 4h11v11.5M12 4l3-3" fill="none" stroke="#bbb" stroke-width=".8"/></svg><div class="a" style="left:98px;top:183px;font-size:11px;line-height:1;color:#fff;font-weight:bold;white-space:nowrap;">V-8 v29</div><svg class="a" style="left:150px;top:181px" width="14" height="14" viewBox="0 0 14 14" ><circle cx="7" cy="7" r="6" fill="#fff" stroke="#222" stroke-width="1.3"/><circle cx="7" cy="7" r="2.4" fill="#222"/></svg><svg class="a" style="left:40px;top:205px" width="10" height="14" viewBox="0 0 10 14" ><path d="M1 1l8 6-8 6z" fill="#f4f4f4" stroke="#222" stroke-width="1.1" stroke-linejoin="round"/></svg><div class="a" style="left:58px;top:202.5px;width:122px;height:19.5px;background:rgba(240,240,240,.96)"></div><svg class="a" style="left:61px;top:204px" width="16" height="16" viewBox="0 0 16 16" ><polygon points="16.00,8.00 13.54,10.30 13.66,13.66 10.30,13.54 8.00,16.00 5.70,13.54 2.34,13.66 2.46,10.30 0.00,8.00 2.46,5.70 2.34,2.34 5.70,2.46 8.00,0.00 10.30,2.46 13.66,2.34 13.54,5.70" fill="#9a9a9a" stroke="#9a9a9a" stroke-width="1.5" stroke-linejoin="round"/><circle cx="8" cy="8" r="2.5" fill="#f0f0f0"/></svg><div class="a" style="left:91px;top:206.5px;font-size:11px;line-height:1;color:#222;font-weight:normal;white-space:nowrap;transform:scaleX(0.778);transform-origin:0 0;">ドキュメントの設定</div><svg class="a" style="left:40px;top:229px" width="10" height="14" viewBox="0 0 10 14" ><path d="M1 1l8 6-8 6z" fill="#f4f4f4" stroke="#222" stroke-width="1.1" stroke-linejoin="round"/></svg><div class="a" style="left:58px;top:226.5px;width:90px;height:19.5px;background:rgba(240,240,240,.96)"></div><svg class="a" style="left:61px;top:230px" width="16" height="13" viewBox="0 0 16 13" ><path d="M0 0h6v1.5H0z" fill="#9a9a9a"/><rect x="0" y="2.5" width="16" height="10.5" fill="#9a9a9a"/><path d="M8 1.5h8v1H8z" fill="#9a9a9a"/></svg><div class="a" style="left:90px;top:230.5px;font-size:11px;line-height:1;color:#222;font-weight:normal;white-space:nowrap;transform:scaleX(0.818);transform-origin:0 0;">ビュー管理</div><svg class="a" style="left:40px;top:253px" width="10" height="14" viewBox="0 0 10 14" ><path d="M1 1l8 6-8 6z" fill="#f4f4f4" stroke="#222" stroke-width="1.1" stroke-linejoin="round"/></svg><div class="a" style="left:58px;top:250.5px;width:91px;height:19.5px;background:rgba(240,240,240,.96)"></div><svg class="a" style="left:61px;top:254px" width="16" height="12" viewBox="0 0 16 12" ><path d="M0.8 6C3 2.3 5.5 1.5 8 1.5s5 .8 7.2 4.5C13 9.7 10.5 10.5 8 10.5S3 9.7.8 6z" fill="none" stroke="#b0b0b0" stroke-width="1"/><circle cx="8" cy="6" r="2.5" fill="none" stroke="#b0b0b0" stroke-width="1"/><path d="M3 0.5L13 11.5" stroke="#b0b0b0" stroke-width="1"/></svg><svg class="a" style="left:86px;top:254px" width="16" height="13" viewBox="0 0 16 13" ><path d="M0 0h6v1.5H0z" fill="#9a9a9a"/><rect x="0" y="2.5" width="16" height="10.5" fill="#9a9a9a"/><path d="M8 1.5h8v1H8z" fill="#9a9a9a"/></svg><div class="a" style="left:116px;top:254.5px;font-size:11px;line-height:1;color:#222;font-weight:normal;white-space:nowrap;">原点</div><svg class="a" style="left:39px;top:278px" width="12" height="12" viewBox="0 0 12 12" ><defs><linearGradient id="tg" x1="0" y1="0" x2="1" y2="1"><stop offset="0" stop-color="#fff"/><stop offset="1" stop-color="#777"/></linearGradient></defs><path d="M11 1v10H1z" fill="url(#tg)" stroke="#222" stroke-width="1"/></svg><div class="a" style="left:58px;top:274.5px;width:91px;height:19.5px;background:rgba(240,240,240,.96)"></div><svg class="a" style="left:61px;top:278px" width="16" height="12" viewBox="0 0 16 12" ><path d="M0.5 6C3 2 5.5 1 8 1s5 1 7.5 5C13 10 10.5 11 8 11S3 10 0.5 6z" fill="#9a9a9a"/><circle cx="8" cy="6" r="3" fill="#f0f0f0"/><circle cx="8" cy="6" r="1.8" fill="#9a9a9a"/></svg><svg class="a" style="left:86px;top:278px" width="16" height="13" viewBox="0 0 16 13" ><path d="M0 0h6v1.5H0z" fill="#9a9a9a"/><rect x="0" y="2.5" width="16" height="10.5" fill="#9a9a9a"/><path d="M8 1.5h8v1H8z" fill="#9a9a9a"/></svg><div class="a" style="left:116px;top:278.5px;font-size:11px;line-height:1;color:#222;font-weight:normal;white-space:nowrap;transform:scaleX(0.727);transform-origin:0 0;">ボディ</div><div class="a" style="left:76px;top:298.5px;width:115px;height:19.5px;background:rgba(240,240,240,.96)"></div><svg class="a" style="left:79px;top:302px" width="16" height="12" viewBox="0 0 16 12" ><path d="M0.5 6C3 2 5.5 1 8 1s5 1 7.5 5C13 10 10.5 11 8 11S3 10 0.5 6z" fill="#9a9a9a"/><circle cx="8" cy="6" r="3" fill="#f0f0f0"/><circle cx="8" cy="6" r="1.8" fill="#9a9a9a"/></svg><svg class="a" style="left:104px;top:300px" width="16" height="16" viewBox="0 0 16 16" ><defs><linearGradient id="bg" x1="0" y1="0" x2="1" y2="0"><stop offset="0" stop-color="#fff"/><stop offset="1" stop-color="#c8c8c8"/></linearGradient></defs><rect x="1" y="0.8" width="14" height="14.5" rx="3" fill="url(#bg)" stroke="#333" stroke-width="1"/><path d="M2 4h12" stroke="#ddd" stroke-width="1"/></svg><div class="a" style="left:133px;top:302.5px;font-size:11px;line-height:1;color:#222;font-weight:normal;white-space:nowrap;transform:scaleX(0.873);transform-origin:0 0;">ボディ上面</div><div class="a" style="left:76px;top:322.5px;width:115px;height:19.5px;background:rgba(240,240,240,.96)"></div><svg class="a" style="left:79px;top:326px" width="16" height="12" viewBox="0 0 16 12" ><path d="M0.5 6C3 2 5.5 1 8 1s5 1 7.5 5C13 10 10.5 11 8 11S3 10 0.5 6z" fill="#9a9a9a"/><circle cx="8" cy="6" r="3" fill="#f0f0f0"/><circle cx="8" cy="6" r="1.8" fill="#9a9a9a"/></svg><svg class="a" style="left:104px;top:324px" width="16" height="16" viewBox="0 0 16 16" ><defs><linearGradient id="bg" x1="0" y1="0" x2="1" y2="0"><stop offset="0" stop-color="#fff"/><stop offset="1" stop-color="#c8c8c8"/></linearGradient></defs><rect x="1" y="0.8" width="14" height="14.5" rx="3" fill="url(#bg)" stroke="#333" stroke-width="1"/><path d="M2 4h12" stroke="#ddd" stroke-width="1"/></svg><div class="a" style="left:133px;top:326.5px;font-size:11px;line-height:1;color:#222;font-weight:normal;white-space:nowrap;transform:scaleX(0.873);transform-origin:0 0;">ボディ底面</div><div class="a" style="left:76px;top:346.5px;width:123px;height:19.5px;background:rgba(240,240,240,.96)"></div><svg class="a" style="left:79px;top:350px" width="16" height="12" viewBox="0 0 16 12" ><path d="M0.5 6C3 2 5.5 1 8 1s5 1 7.5 5C13 10 10.5 11 8 11S3 10 0.5 6z" fill="#9a9a9a"/><circle cx="8" cy="6" r="3" fill="#f0f0f0"/><circle cx="8" cy="6" r="1.8" fill="#9a9a9a"/></svg><svg class="a" style="left:104px;top:348px" width="16" height="16" viewBox="0 0 16 16" ><defs><linearGradient id="bg" x1="0" y1="0" x2="1" y2="0"><stop offset="0" stop-color="#fff"/><stop offset="1" stop-color="#c8c8c8"/></linearGradient></defs><rect x="1" y="0.8" width="14" height="14.5" rx="3" fill="url(#bg)" stroke="#333" stroke-width="1"/><path d="M2 4h12" stroke="#ddd" stroke-width="1"/></svg><div class="a" style="left:133px;top:350.5px;font-size:11px;line-height:1;color:#222;font-weight:normal;white-space:nowrap;transform:scaleX(0.727);transform-origin:0 0;">カートリッジ蓋</div><div class="a" style="left:76px;top:370.5px;width:111px;height:19.5px;background:rgba(240,240,240,.96)"></div><svg class="a" style="left:79px;top:374px" width="16" height="12" viewBox="0 0 16 12" ><path d="M0.5 6C3 2 5.5 1 8 1s5 1 7.5 5C13 10 10.5 11 8 11S3 10 0.5 6z" fill="#9a9a9a"/><circle cx="8" cy="6" r="3" fill="#f0f0f0"/><circle cx="8" cy="6" r="1.8" fill="#9a9a9a"/></svg><svg class="a" style="left:104px;top:372px" width="16" height="16" viewBox="0 0 16 16" ><defs><linearGradient id="bg" x1="0" y1="0" x2="1" y2="0"><stop offset="0" stop-color="#fff"/><stop offset="1" stop-color="#c8c8c8"/></linearGradient></defs><rect x="1" y="0.8" width="14" height="14.5" rx="3" fill="url(#bg)" stroke="#333" stroke-width="1"/><path d="M2 4h12" stroke="#ddd" stroke-width="1"/></svg><div class="a" style="left:133px;top:374.5px;font-size:11px;line-height:1;color:#222;font-weight:normal;white-space:nowrap;transform:scaleX(0.818);transform-origin:0 0;">キーボード</div><div class="a" style="left:76px;top:394.5px;width:119px;height:19.5px;background:rgba(240,240,240,.96)"></div><svg class="a" style="left:79px;top:398px" width="16" height="12" viewBox="0 0 16 12" ><path d="M0.5 6C3 2 5.5 1 8 1s5 1 7.5 5C13 10 10.5 11 8 11S3 10 0.5 6z" fill="#9a9a9a"/><circle cx="8" cy="6" r="3" fill="#f0f0f0"/><circle cx="8" cy="6" r="1.8" fill="#9a9a9a"/></svg><svg class="a" style="left:104px;top:396px" width="16" height="16" viewBox="0 0 16 16" ><defs><linearGradient id="bg" x1="0" y1="0" x2="1" y2="0"><stop offset="0" stop-color="#fff"/><stop offset="1" stop-color="#c8c8c8"/></linearGradient></defs><rect x="1" y="0.8" width="14" height="14.5" rx="3" fill="url(#bg)" stroke="#333" stroke-width="1"/><path d="M2 4h12" stroke="#ddd" stroke-width="1"/></svg><div class="a" style="left:133px;top:398.5px;font-size:11px;line-height:1;color:#222;font-weight:normal;white-space:nowrap;transform:scaleX(0.773);transform-origin:0 0;">カーソルキー</div><div class="a" style="left:76px;top:418.5px;width:91px;height:19.5px;background:rgba(240,240,240,.96)"></div><svg class="a" style="left:79px;top:422px" width="16" height="12" viewBox="0 0 16 12" ><path d="M0.5 6C3 2 5.5 1 8 1s5 1 7.5 5C13 10 10.5 11 8 11S3 10 0.5 6z" fill="#9a9a9a"/><circle cx="8" cy="6" r="3" fill="#f0f0f0"/><circle cx="8" cy="6" r="1.8" fill="#9a9a9a"/></svg><svg class="a" style="left:104px;top:420px" width="16" height="16" viewBox="0 0 16 16" ><defs><linearGradient id="bg" x1="0" y1="0" x2="1" y2="0"><stop offset="0" stop-color="#fff"/><stop offset="1" stop-color="#c8c8c8"/></linearGradient></defs><rect x="1" y="0.8" width="14" height="14.5" rx="3" fill="url(#bg)" stroke="#333" stroke-width="1"/><path d="M2 4h12" stroke="#ddd" stroke-width="1"/></svg><div class="a" style="left:133px;top:422.5px;font-size:11px;line-height:1;color:#222;font-weight:normal;white-space:nowrap;transform:scaleX(0.893);transform-origin:0 0;">LED1</div><div class="a" style="left:76px;top:442.5px;width:95px;height:19.5px;background:rgba(240,240,240,.96)"></div><svg class="a" style="left:79px;top:446px" width="16" height="12" viewBox="0 0 16 12" ><path d="M0.5 6C3 2 5.5 1 8 1s5 1 7.5 5C13 10 10.5 11 8 11S3 10 0.5 6z" fill="#9a9a9a"/><circle cx="8" cy="6" r="3" fill="#f0f0f0"/><circle cx="8" cy="6" r="1.8" fill="#9a9a9a"/></svg><svg class="a" style="left:104px;top:444px" width="16" height="16" viewBox="0 0 16 16" ><defs><linearGradient id="bg" x1="0" y1="0" x2="1" y2="0"><stop offset="0" stop-color="#fff"/><stop offset="1" stop-color="#c8c8c8"/></linearGradient></defs><rect x="1" y="0.8" width="14" height="14.5" rx="3" fill="url(#bg)" stroke="#333" stroke-width="1"/><path d="M2 4h12" stroke="#ddd" stroke-width="1"/></svg><div class="a" style="left:133px;top:446.5px;font-size:11px;line-height:1;color:#222;font-weight:normal;white-space:nowrap;transform:scaleX(0.929);transform-origin:0 0;">LED2</div><div class="a" style="left:76px;top:466.5px;width:95px;height:19.5px;background:rgba(240,240,240,.96)"></div><svg class="a" style="left:79px;top:470px" width="16" height="12" viewBox="0 0 16 12" ><path d="M0.5 6C3 2 5.5 1 8 1s5 1 7.5 5C13 10 10.5 11 8 11S3 10 0.5 6z" fill="#9a9a9a"/><circle cx="8" cy="6" r="3" fill="#f0f0f0"/><circle cx="8" cy="6" r="1.8" fill="#9a9a9a"/></svg><svg class="a" style="left:104px;top:468px" width="16" height="16" viewBox="0 0 16 16" ><defs><linearGradient id="bg" x1="0" y1="0" x2="1" y2="0"><stop offset="0" stop-color="#fff"/><stop offset="1" stop-color="#c8c8c8"/></linearGradient></defs><rect x="1" y="0.8" width="14" height="14.5" rx="3" fill="url(#bg)" stroke="#333" stroke-width="1"/><path d="M2 4h12" stroke="#ddd" stroke-width="1"/></svg><div class="a" style="left:133px;top:470.5px;font-size:11px;line-height:1;color:#222;font-weight:normal;white-space:nowrap;transform:scaleX(0.929);transform-origin:0 0;">LED3</div><div class="a" style="left:76px;top:490.5px;width:119px;height:19.5px;background:rgba(240,240,240,.96)"></div><svg class="a" style="left:79px;top:494px" width="16" height="12" viewBox="0 0 16 12" ><path d="M0.5 6C3 2 5.5 1 8 1s5 1 7.5 5C13 10 10.5 11 8 11S3 10 0.5 6z" fill="#9a9a9a"/><circle cx="8" cy="6" r="3" fill="#f0f0f0"/><circle cx="8" cy="6" r="1.8" fill="#9a9a9a"/></svg><svg class="a" style="left:104px;top:492px" width="16" height="16" viewBox="0 0 16 16" ><defs><linearGradient id="bg" x1="0" y1="0" x2="1" y2="0"><stop offset="0" stop-color="#fff"/><stop offset="1" stop-color="#c8c8c8"/></linearGradient></defs><rect x="1" y="0.8" width="14" height="14.5" rx="3" fill="url(#bg)" stroke="#333" stroke-width="1"/><path d="M2 4h12" stroke="#ddd" stroke-width="1"/></svg><div class="a" style="left:133px;top:494.5px;font-size:11px;line-height:1;color:#222;font-weight:normal;white-space:nowrap;transform:scaleX(0.803);transform-origin:0 0;">電源コネクタ</div><div class="a" style="left:76px;top:514.5px;width:151px;height:19.5px;background:rgba(240,240,240,.96)"></div><svg class="a" style="left:79px;top:518px" width="16" height="12" viewBox="0 0 16 12" ><path d="M0.5 6C3 2 5.5 1 8 1s5 1 7.5 5C13 10 10.5 11 8 11S3 10 0.5 6z" fill="#9a9a9a"/><circle cx="8" cy="6" r="3" fill="#f0f0f0"/><circle cx="8" cy="6" r="1.8" fill="#9a9a9a"/></svg><svg class="a" style="left:104px;top:516px" width="16" height="16" viewBox="0 0 16 16" ><defs><linearGradient id="bg" x1="0" y1="0" x2="1" y2="0"><stop offset="0" stop-color="#fff"/><stop offset="1" stop-color="#c8c8c8"/></linearGradient></defs><rect x="1" y="0.8" width="14" height="14.5" rx="3" fill="url(#bg)" stroke="#333" stroke-width="1"/><path d="M2 4h12" stroke="#ddd" stroke-width="1"/></svg><div class="a" style="left:133px;top:518.5px;font-size:11px;line-height:1;color:#222;font-weight:normal;white-space:nowrap;transform:scaleX(0.694);transform-origin:0 0;">ジョイスティックポート</div><div class="a" style="left:76px;top:538.5px;width:196px;height:19.5px;background:rgba(240,240,240,.96)"></div><svg class="a" style="left:79px;top:542px" width="16" height="12" viewBox="0 0 16 12" ><path d="M0.5 6C3 2 5.5 1 8 1s5 1 7.5 5C13 10 10.5 11 8 11S3 10 0.5 6z" fill="#9a9a9a"/><circle cx="8" cy="6" r="3" fill="#f0f0f0"/><circle cx="8" cy="6" r="1.8" fill="#9a9a9a"/></svg><svg class="a" style="left:104px;top:540px" width="16" height="16" viewBox="0 0 16 16" ><defs><linearGradient id="bg" x1="0" y1="0" x2="1" y2="0"><stop offset="0" stop-color="#fff"/><stop offset="1" stop-color="#c8c8c8"/></linearGradient></defs><rect x="1" y="0.8" width="14" height="14.5" rx="3" fill="url(#bg)" stroke="#333" stroke-width="1"/><path d="M2 4h12" stroke="#ddd" stroke-width="1"/></svg><div class="a" style="left:133px;top:542.5px;font-size:11px;line-height:1;color:#222;font-weight:normal;white-space:nowrap;transform:scaleX(0.710);transform-origin:0 0;">ジョイスティックポート・スペーサ</div><svg class="a" style="left:39px;top:566px" width="12" height="12" viewBox="0 0 12 12" ><defs><linearGradient id="tg" x1="0" y1="0" x2="1" y2="1"><stop offset="0" stop-color="#fff"/><stop offset="1" stop-color="#777"/></linearGradient></defs><path d="M11 1v10H1z" fill="url(#tg)" stroke="#222" stroke-width="1"/></svg><div class="a" style="left:58px;top:562.5px;width:111px;height:19.5px;background:rgba(240,240,240,.96)"></div><svg class="a" style="left:61px;top:566px" width="16" height="12" viewBox="0 0 16 12" ><path d="M0.5 6C3 2 5.5 1 8 1s5 1 7.5 5C13 10 10.5 11 8 11S3 10 0.5 6z" fill="#9a9a9a"/><circle cx="8" cy="6" r="3" fill="#f0f0f0"/><circle cx="8" cy="6" r="1.8" fill="#9a9a9a"/></svg><svg class="a" style="left:86px;top:566px" width="16" height="13" viewBox="0 0 16 13" ><path d="M0 0h6v1.5H0z" fill="#9a9a9a"/><rect x="0" y="2.5" width="16" height="10.5" fill="#9a9a9a"/><path d="M8 1.5h8v1H8z" fill="#9a9a9a"/></svg><div class="a" style="left:116px;top:566.5px;font-size:11px;line-height:1;color:#222;font-weight:normal;white-space:nowrap;transform:scaleX(0.727);transform-origin:0 0;">キャンバス</div><div class="a" style="left:76px;top:586.5px;width:183px;height:19.5px;background:rgba(240,240,240,.96)"></div><svg class="a" style="left:79px;top:590px" width="16" height="12" viewBox="0 0 16 12" ><path d="M0.8 6C3 2.3 5.5 1.5 8 1.5s5 .8 7.2 4.5C13 9.7 10.5 10.5 8 10.5S3 9.7.8 6z" fill="none" stroke="#b0b0b0" stroke-width="1"/><circle cx="8" cy="6" r="2.5" fill="none" stroke="#b0b0b0" stroke-width="1"/><path d="M3 0.5L13 11.5" stroke="#b0b0b0" stroke-width="1"/></svg><svg class="a" style="left:104px;top:588px" width="16" height="16" viewBox="0 0 16 16" ><rect x="0.5" y="0.5" width="15" height="15" fill="#bcd8ee" stroke="#333" stroke-width="1"/><path d="M1 15V9l5-4 9 5v5z" fill="#8c98a4"/><circle cx="12" cy="4" r="1.6" fill="#f7e27a"/><circle cx="5" cy="11.5" r="3.6" fill="#d22" /><circle cx="5" cy="11.5" r="2.3" fill="#8c98a4"/><path d="M3 13.3l4-3.6" stroke="#d22" stroke-width="1.2"/></svg><div class="a" style="left:134px;top:590.5px;font-size:11px;line-height:1;color:#222;font-weight:normal;white-space:nowrap;transform:scaleX(0.958);transform-origin:0 0;">IMG_20220429_170630</div><div class="a" style="left:76px;top:610.5px;width:183px;height:19.5px;background:rgba(240,240,240,.96)"></div><svg class="a" style="left:79px;top:614px" width="16" height="12" viewBox="0 0 16 12" ><path d="M0.8 6C3 2.3 5.5 1.5 8 1.5s5 .8 7.2 4.5C13 9.7 10.5 10.5 8 10.5S3 9.7.8 6z" fill="none" stroke="#b0b0b0" stroke-width="1"/><circle cx="8" cy="6" r="2.5" fill="none" stroke="#b0b0b0" stroke-width="1"/><path d="M3 0.5L13 11.5" stroke="#b0b0b0" stroke-width="1"/></svg><svg class="a" style="left:104px;top:612px" width="16" height="16" viewBox="0 0 16 16" ><rect x="0.5" y="0.5" width="15" height="15" fill="#bcd8ee" stroke="#333" stroke-width="1"/><path d="M1 15V9l5-4 9 5v5z" fill="#8c98a4"/><circle cx="12" cy="4" r="1.6" fill="#f7e27a"/><circle cx="5" cy="11.5" r="3.6" fill="#d22" /><circle cx="5" cy="11.5" r="2.3" fill="#8c98a4"/><path d="M3 13.3l4-3.6" stroke="#d22" stroke-width="1.2"/></svg><div class="a" style="left:134px;top:614.5px;font-size:11px;line-height:1;color:#222;font-weight:normal;white-space:nowrap;transform:scaleX(0.958);transform-origin:0 0;">IMG_20220429_170636</div><svg class="a" style="left:40px;top:637px" width="10" height="14" viewBox="0 0 10 14" ><path d="M1 1l8 6-8 6z" fill="#f4f4f4" stroke="#222" stroke-width="1.1" stroke-linejoin="round"/></svg><div class="a" style="left:58px;top:634.5px;width:99px;height:19.5px;background:rgba(240,240,240,.96)"></div><svg class="a" style="left:61px;top:638px" width="16" height="12" viewBox="0 0 16 12" ><path d="M0.5 6C3 2 5.5 1 8 1s5 1 7.5 5C13 10 10.5 11 8 11S3 10 0.5 6z" fill="#9a9a9a"/><circle cx="8" cy="6" r="3" fill="#f0f0f0"/><circle cx="8" cy="6" r="1.8" fill="#9a9a9a"/></svg><svg class="a" style="left:86px;top:638px" width="16" height="13" viewBox="0 0 16 13" ><path d="M0 0h6v1.5H0z" fill="#9a9a9a"/><rect x="0" y="2.5" width="16" height="10.5" fill="#9a9a9a"/><path d="M8 1.5h8v1H8z" fill="#9a9a9a"/></svg><div class="a" style="left:116px;top:638.5px;font-size:11px;line-height:1;color:#222;font-weight:normal;white-space:nowrap;transform:scaleX(0.682);transform-origin:0 0;">スケッチ</div><svg class="a" style="left:40px;top:661px" width="10" height="14" viewBox="0 0 10 14" ><path d="M1 1l8 6-8 6z" fill="#f4f4f4" stroke="#222" stroke-width="1.1" stroke-linejoin="round"/></svg><div class="a" style="left:58px;top:658.5px;width:139px;height:19.5px;background:rgba(240,240,240,.96)"></div><svg class="a" style="left:61px;top:662px" width="16" height="12" viewBox="0 0 16 12" ><path d="M0.5 6C3 2 5.5 1 8 1s5 1 7.5 5C13 10 10.5 11 8 11S3 10 0.5 6z" fill="#9a9a9a"/><circle cx="8" cy="6" r="3" fill="#f0f0f0"/><circle cx="8" cy="6" r="1.8" fill="#9a9a9a"/></svg><svg class="a" style="left:86px;top:662px" width="16" height="13" viewBox="0 0 16 13" ><path d="M0 0h6v1.5H0z" fill="#9a9a9a"/><rect x="0" y="2.5" width="16" height="10.5" fill="#9a9a9a"/><path d="M8 1.5h8v1H8z" fill="#9a9a9a"/></svg><div class="a" style="left:116px;top:662.5px;font-size:11px;line-height:1;color:#222;font-weight:normal;white-space:nowrap;transform:scaleX(0.717);transform-origin:0 0;">コンストラクション</div><div class="a" style="left:58px;top:682.5px;width:106px;height:19.5px;background:rgba(240,240,240,.96)"></div><svg class="a" style="left:61px;top:684px" width="17" height="16" viewBox="0 0 17 16" ><path d="M1 3l2.5-2.5h8L9 3z" fill="#8ec9f5"/><rect x="1" y="3" width="8" height="10" fill="#5aa7e2"/><path d="M9 3l2.5-2.5v10L9 13z" fill="#3f8fcf"/><path d="M1 13h8l2.5-2.5v1.5L9 15H1z" fill="#bdbdbd"/><path d="M14.5 2v13" stroke="#111" stroke-width="1.1"/><path d="M13 4l1.5-3.5L16 4z" fill="#111"/></svg><div class="a" style="left:90px;top:686.5px;font-size:11px;line-height:1;color:#222;font-weight:normal;white-space:nowrap;transform:scaleX(0.926);transform-origin:0 0;">押し出し1439</div><div class="a" style="left:58px;top:706.5px;width:106px;height:19.5px;background:rgba(240,240,240,.96)"></div><svg class="a" style="left:61px;top:708px" width="17" height="16" viewBox="0 0 17 16" ><path d="M1 3l2.5-2.5h8L9 3z" fill="#8ec9f5"/><rect x="1" y="3" width="8" height="10" fill="#5aa7e2"/><path d="M9 3l2.5-2.5v10L9 13z" fill="#3f8fcf"/><path d="M1 13h8l2.5-2.5v1.5L9 15H1z" fill="#bdbdbd"/><path d="M14.5 2v13" stroke="#111" stroke-width="1.1"/><path d="M13 4l1.5-3.5L16 4z" fill="#111"/></svg><div class="a" style="left:90px;top:710.5px;font-size:11px;line-height:1;color:#222;font-weight:normal;white-space:nowrap;transform:scaleX(0.926);transform-origin:0 0;">押し出し1472</div><div class="a" style="left:58px;top:730.5px;width:106px;height:19.5px;background:rgba(240,240,240,.96)"></div><svg class="a" style="left:61px;top:732px" width="17" height="16" viewBox="0 0 17 16" ><path d="M1 3l2.5-2.5h8L9 3z" fill="#8ec9f5"/><rect x="1" y="3" width="8" height="10" fill="#5aa7e2"/><path d="M9 3l2.5-2.5v10L9 13z" fill="#3f8fcf"/><path d="M1 13h8l2.5-2.5v1.5L9 15H1z" fill="#bdbdbd"/><path d="M14.5 2v13" stroke="#111" stroke-width="1.1"/><path d="M13 4l1.5-3.5L16 4z" fill="#111"/></svg><div class="a" style="left:90px;top:734.5px;font-size:11px;line-height:1;color:#222;font-weight:normal;white-space:nowrap;transform:scaleX(0.926);transform-origin:0 0;">押し出し1651</div><div class="a" style="left:58px;top:754.5px;width:106px;height:19.5px;background:rgba(240,240,240,.96)"></div><svg class="a" style="left:61px;top:756px" width="17" height="16" viewBox="0 0 17 16" ><path d="M1 3l2.5-2.5h8L9 3z" fill="#8ec9f5"/><rect x="1" y="3" width="8" height="10" fill="#5aa7e2"/><path d="M9 3l2.5-2.5v10L9 13z" fill="#3f8fcf"/><path d="M1 13h8l2.5-2.5v1.5L9 15H1z" fill="#bdbdbd"/><path d="M14.5 2v13" stroke="#111" stroke-width="1.1"/><path d="M13 4l1.5-3.5L16 4z" fill="#111"/></svg><div class="a" style="left:90px;top:758.5px;font-size:11px;line-height:1;color:#222;font-weight:normal;white-space:nowrap;transform:scaleX(0.926);transform-origin:0 0;">押し出し1652</div><div class="a" style="left:58px;top:778.5px;width:106px;height:19.5px;background:rgba(240,240,240,.96)"></div><svg class="a" style="left:61px;top:780px" width="17" height="16" viewBox="0 0 17 16" ><path d="M1 3l2.5-2.5h8L9 3z" fill="#8ec9f5"/><rect x="1" y="3" width="8" height="10" fill="#5aa7e2"/><path d="M9 3l2.5-2.5v10L9 13z" fill="#3f8fcf"/><path d="M1 13h8l2.5-2.5v1.5L9 15H1z" fill="#bdbdbd"/><path d="M14.5 2v13" stroke="#111" stroke-width="1.1"/><path d="M13 4l1.5-3.5L16 4z" fill="#111"/></svg><div class="a" style="left:90px;top:782.5px;font-size:11px;line-height:1;color:#222;font-weight:normal;white-space:nowrap;transform:scaleX(0.926);transform-origin:0 0;">押し出し2058</div><div class="a" style="left:58px;top:802.5px;width:106px;height:19.5px;background:rgba(240,240,240,.96)"></div><svg class="a" style="left:61px;top:804px" width="17" height="16" viewBox="0 0 17 16" ><path d="M1 3l2.5-2.5h8L9 3z" fill="#8ec9f5"/><rect x="1" y="3" width="8" height="10" fill="#5aa7e2"/><path d="M9 3l2.5-2.5v10L9 13z" fill="#3f8fcf"/><path d="M1 13h8l2.5-2.5v1.5L9 15H1z" fill="#bdbdbd"/><path d="M14.5 2v13" stroke="#111" stroke-width="1.1"/><path d="M13 4l1.5-3.5L16 4z" fill="#111"/></svg><div class="a" style="left:90px;top:806.5px;font-size:11px;line-height:1;color:#222;font-weight:normal;white-space:nowrap;transform:scaleX(0.926);transform-origin:0 0;">押し出し2060</div><div class="a" style="left:58px;top:826.5px;width:106px;height:19.5px;background:rgba(240,240,240,.96)"></div><svg class="a" style="left:61px;top:828px" width="17" height="16" viewBox="0 0 17 16" ><path d="M1 3l2.5-2.5h8L9 3z" fill="#8ec9f5"/><rect x="1" y="3" width="8" height="10" fill="#5aa7e2"/><path d="M9 3l2.5-2.5v10L9 13z" fill="#3f8fcf"/><path d="M1 13h8l2.5-2.5v1.5L9 15H1z" fill="#bdbdbd"/><path d="M14.5 2v13" stroke="#111" stroke-width="1.1"/><path d="M13 4l1.5-3.5L16 4z" fill="#111"/></svg><div class="a" style="left:90px;top:830.5px;font-size:11px;line-height:1;color:#222;font-weight:normal;white-space:nowrap;transform:scaleX(0.926);transform-origin:0 0;">押し出し2067</div><div class="a" style="left:58px;top:850.5px;width:106px;height:19.5px;background:rgba(240,240,240,.96)"></div><svg class="a" style="left:61px;top:852px" width="17" height="16" viewBox="0 0 17 16" ><path d="M1 3l2.5-2.5h8L9 3z" fill="#8ec9f5"/><rect x="1" y="3" width="8" height="10" fill="#5aa7e2"/><path d="M9 3l2.5-2.5v10L9 13z" fill="#3f8fcf"/><path d="M1 13h8l2.5-2.5v1.5L9 15H1z" fill="#bdbdbd"/><path d="M14.5 2v13" stroke="#111" stroke-width="1.1"/><path d="M13 4l1.5-3.5L16 4z" fill="#111"/></svg><div class="a" style="left:90px;top:854.5px;font-size:11px;line-height:1;color:#222;font-weight:normal;white-space:nowrap;transform:scaleX(0.926);transform-origin:0 0;">押し出し2068</div><div class="a" style="left:58px;top:874.5px;width:106px;height:19.5px;background:rgba(240,240,240,.96)"></div><svg class="a" style="left:61px;top:876px" width="17" height="16" viewBox="0 0 17 16" ><path d="M1 3l2.5-2.5h8L9 3z" fill="#8ec9f5"/><rect x="1" y="3" width="8" height="10" fill="#5aa7e2"/><path d="M9 3l2.5-2.5v10L9 13z" fill="#3f8fcf"/><path d="M1 13h8l2.5-2.5v1.5L9 15H1z" fill="#bdbdbd"/><path d="M14.5 2v13" stroke="#111" stroke-width="1.1"/><path d="M13 4l1.5-3.5L16 4z" fill="#111"/></svg><div class="a" style="left:90px;top:878.5px;font-size:11px;line-height:1;color:#222;font-weight:normal;white-space:nowrap;transform:scaleX(0.926);transform-origin:0 0;">押し出し2075</div><div class="a" style="left:58px;top:898.5px;width:106px;height:19.5px;background:rgba(240,240,240,.96)"></div><svg class="a" style="left:61px;top:900px" width="17" height="16" viewBox="0 0 17 16" ><path d="M1 3l2.5-2.5h8L9 3z" fill="#8ec9f5"/><rect x="1" y="3" width="8" height="10" fill="#5aa7e2"/><path d="M9 3l2.5-2.5v10L9 13z" fill="#3f8fcf"/><path d="M1 13h8l2.5-2.5v1.5L9 15H1z" fill="#bdbdbd"/><path d="M14.5 2v13" stroke="#111" stroke-width="1.1"/><path d="M13 4l1.5-3.5L16 4z" fill="#111"/></svg><div class="a" style="left:90px;top:902.5px;font-size:11px;line-height:1;color:#222;font-weight:normal;white-space:nowrap;transform:scaleX(0.926);transform-origin:0 0;">押し出し2077</div><div class="a" style="left:58px;top:922.5px;width:106px;height:19.5px;background:rgba(240,240,240,.96)"></div><svg class="a" style="left:61px;top:924px" width="17" height="16" viewBox="0 0 17 16" ><path d="M1 3l2.5-2.5h8L9 3z" fill="#8ec9f5"/><rect x="1" y="3" width="8" height="10" fill="#5aa7e2"/><path d="M9 3l2.5-2.5v10L9 13z" fill="#3f8fcf"/><path d="M1 13h8l2.5-2.5v1.5L9 15H1z" fill="#bdbdbd"/><path d="M14.5 2v13" stroke="#111" stroke-width="1.1"/><path d="M13 4l1.5-3.5L16 4z" fill="#111"/></svg><div class="a" style="left:90px;top:926.5px;font-size:11px;line-height:1;color:#222;font-weight:normal;white-space:nowrap;transform:scaleX(0.926);transform-origin:0 0;">押し出し2151</div><div class="a" style="left:58px;top:946.5px;width:106px;height:19.5px;background:rgba(240,240,240,.96)"></div><svg class="a" style="left:61px;top:948px" width="17" height="16" viewBox="0 0 17 16" ><path d="M1 3l2.5-2.5h8L9 3z" fill="#8ec9f5"/><rect x="1" y="3" width="8" height="10" fill="#5aa7e2"/><path d="M9 3l2.5-2.5v10L9 13z" fill="#3f8fcf"/><path d="M1 13h8l2.5-2.5v1.5L9 15H1z" fill="#bdbdbd"/><path d="M14.5 2v13" stroke="#111" stroke-width="1.1"/><path d="M13 4l1.5-3.5L16 4z" fill="#111"/></svg><div class="a" style="left:90px;top:950.5px;font-size:11px;line-height:1;color:#222;font-weight:normal;white-space:nowrap;transform:scaleX(0.926);transform-origin:0 0;">押し出し2152</div><div class="a" style="left:58px;top:970.5px;width:106px;height:19.5px;background:rgba(240,240,240,.96)"></div><svg class="a" style="left:61px;top:972px" width="17" height="16" viewBox="0 0 17 16" ><path d="M1 3l2.5-2.5h8L9 3z" fill="#8ec9f5"/><rect x="1" y="3" width="8" height="10" fill="#5aa7e2"/><path d="M9 3l2.5-2.5v10L9 13z" fill="#3f8fcf"/><path d="M1 13h8l2.5-2.5v1.5L9 15H1z" fill="#bdbdbd"/><path d="M14.5 2v13" stroke="#111" stroke-width="1.1"/><path d="M13 4l1.5-3.5L16 4z" fill="#111"/></svg><div class="a" style="left:90px;top:974.5px;font-size:11px;line-height:1;color:#222;font-weight:normal;white-space:nowrap;transform:scaleX(0.926);transform-origin:0 0;">押し出し2414</div><div class="a" style="left:4px;top:1019px;width:300px;height:25px;background:#f0f0f0;border:1px solid #c9c9c9"></div><div class="a" style="left:28px;top:1025.5px;font-size:10.5px;line-height:1;color:#444;font-weight:normal;white-space:nowrap;transform:scaleX(0.705);transform-origin:0 0;">コメント</div><svg class="a" style="left:282px;top:1026px" width="11" height="11" viewBox="0 0 11 11" ><circle cx="5.5" cy="5.5" r="5.5" fill="#222"/><rect x="2.5" y="4.8" width="6" height="1.6" fill="#fff"/><rect x="4.7" y="2.5" width="1.6" height="6" fill="#fff"/></svg><div class="a" style="left:299px;top:1025px;width:1px;height:11px;background:#888"></div><div class="a" style="left:301px;top:1027px;width:1px;height:7px;background:#888"></div><svg class="a" style="left:0;top:0;opacity:.88" width="1928" height="1056" viewBox="0 0 1928 1056"><defs><filter id="vcb" x="-50%" y="-50%" width="200%" height="200%"><feGaussianBlur stdDeviation="5"/></filter><linearGradient id="vct" x1="0" y1="0" x2="1" y2="1"><stop offset="0" stop-color="#f3f3f3"/><stop offset="1" stop-color="#e4e4e4"/></linearGradient></defs><polygon points="1826,232 1856,255 1892,228 1880,215 1840,215" fill="#000" opacity=".25" filter="url(#vcb)"/><polygon points="1857.6,169.0 1892.0,193.0 1854.5,217.0 1821.0,189.4" fill="url(#vct)"/><polygon points="1821.0,189.4 1854.5,217.0 1855.0,248.5 1825.0,224.0" fill="#e9e9e9"/><polygon points="1854.5,217.0 1892.0,193.0 1888.0,221.0 1855.0,248.5" fill="#dedede"/><polyline points="1821.0,189.4 1857.6,169.0 1892.0,193.0 1888.0,221.0 1855.0,248.5" fill="none" stroke="#555" stroke-width="1" stroke-dasharray="3 2.5"/><polyline points="1821.0,189.4 1854.5,217.0 1892.0,193.0" fill="none" stroke="#555" stroke-width="1" stroke-dasharray="3 2.5"/><polyline points="1854.5,217.0 1855.0,248.5" fill="none" stroke="#555" stroke-width="1" stroke-dasharray="3 2.5"/><text x="0" y="0" font-size="17" fill="#6a6a6a" font-family="Liberation Sans" transform="matrix(0.87,-0.45,0.75,0.5,1843,201)">上</text><text x="0" y="0" font-size="15" fill="#777" font-family="Liberation Sans" transform="matrix(0.8,0.62,0,1,1830,222)">前</text><text x="0" y="0" font-size="15" fill="#777" font-family="Liberation Sans" transform="matrix(0.8,-0.62,0,1,1862,239)">右</text><line x1="1820" y1="184" x2="1825" y2="224" stroke="#6d6df5" stroke-width="1.5"/><line x1="1825" y1="224" x2="1860" y2="254" stroke="#f58a8a" stroke-width="1.5"/><text x="1813" y="184" font-size="10" fill="#6d6df5" font-family="Liberation Sans">Z</text><text x="1860" y="265" font-size="10" fill="#f58a8a" font-family="Liberation Sans">X</text></svg><div class="a" style="left:841px;top:1020px;width:237px;height:24px;background:#f0f0f0"></div><svg class="a" style="left:844px;top:1024px" width="17" height="17" viewBox="0 0 17 17" ><path d="M8.5 1v15" stroke="#222" stroke-width="1"/><path d="M6.5 4l2-3 2 3z" fill="#fff" stroke="#222" stroke-width=".8"/><rect x="7.3" y="4" width="2.4" height="12" fill="#fff" stroke="#222" stroke-width=".8"/><path d="M3 12c-3-1-2-4 5-4.5 6-.5 9 1 7.5 3" fill="none" stroke="#222" stroke-width="1.3"/><path d="M1 12.5l3-2v4z" fill="#222"/></svg><svg class="a" style="left:865px;top:1030px" width="7" height="5" viewBox="0 0 7 5" ><path d="M0 0h7L3.5 4.5z" fill="#222"/></svg><svg class="a" style="left:877px;top:1024px" width="17" height="17" viewBox="0 0 17 17" ><rect x="1" y="6" width="15" height="10" fill="#f4f4f4" stroke="#444" stroke-width="1"/><rect x="4" y="9" width="9" height="4" fill="#9aa3b0" stroke="#444" stroke-width=".8"/><path d="M2 6l2-4 3 2 4-2 3 1v3" fill="#bbb" stroke="#666" stroke-width=".6"/></svg><svg class="a" style="left:903px;top:1024px" width="17" height="17" viewBox="0 0 17 17" ><path d="M4 9V4a1 1 0 0 1 2 0v4V2a1 1 0 0 1 2 0v6V2.5a1 1 0 0 1 2 0V8V4a1 1 0 0 1 2 0v7c0 3-2 5-4.5 5S4 15 2.5 12L1 9.5a1 1 0 0 1 1.6-1z" fill="#eee" stroke="#333" stroke-width=".9"/></svg><svg class="a" style="left:929px;top:1024px" width="17" height="17" viewBox="0 0 17 17" ><circle cx="6.5" cy="8.5" r="4.8" fill="#dfeff0" stroke="#333" stroke-width="1.2"/><path d="M10 12l4 4" stroke="#333" stroke-width="2.4"/><path d="M13 1v5M10.5 3.5h5M10.5 7.5h5" stroke="#222" stroke-width=".9"/></svg><svg class="a" style="left:955px;top:1024px" width="17" height="17" viewBox="0 0 17 17" ><rect x=".5" y=".5" width="16" height="16" fill="none" stroke="#555" stroke-width=".8" stroke-dasharray="1.5 1.5"/><circle cx="7" cy="7" r="5" fill="#dfeff0" stroke="#333" stroke-width="1.2"/><path d="M10.5 10.5l5 5" stroke="#333" stroke-width="2.4"/></svg><svg class="a" style="left:977px;top:1030px" width="7" height="5" viewBox="0 0 7 5" ><path d="M0 0h7L3.5 4.5z" fill="#222"/></svg><svg class="a" style="left:988px;top:1024px" width="17" height="17" viewBox="0 0 17 17" ><rect x="1" y="1" width="15" height="12" rx="1" fill="#ddd" stroke="#444" stroke-width="1"/><rect x="3" y="3" width="11" height="8" fill="#7ea6d8"/><rect x="6" y="13" width="5" height="3" fill="#ddd" stroke="#666" stroke-width=".6"/></svg><svg class="a" style="left:1007px;top:1030px" width="7" height="5" viewBox="0 0 7 5" ><path d="M0 0h7L3.5 4.5z" fill="#222"/></svg><svg class="a" style="left:1019px;top:1024px" width="16" height="16" viewBox="0 0 16 16" ><rect x=".5" y=".5" width="15" height="15" fill="#fff" stroke="#555" stroke-width="1"/><rect x="1.2" y="1.2" width="2.6" height="2.6" fill="#9aa0aa"/><rect x="1.2" y="4.7" width="2.6" height="2.6" fill="#9aa0aa"/><rect x="1.2" y="8.2" width="2.6" height="2.6" fill="#9aa0aa"/><rect x="1.2" y="11.7" width="2.6" height="2.6" fill="#9aa0aa"/><rect x="4.7" y="1.2" width="2.6" height="2.6" fill="#9aa0aa"/><rect x="4.7" y="4.7" width="2.6" height="2.6" fill="#9aa0aa"/><rect x="4.7" y="8.2" width="2.6" height="2.6" fill="#9aa0aa"/><rect x="4.7" y="11.7" width="2.6" height="2.6" fill="#9aa0aa"/><rect x="8.2" y="1.2" width="2.6" height="2.6" fill="#9aa0aa"/><rect x="8.2" y="4.7" width="2.6" height="2.6" fill="#9aa0aa"/><rect x="8.2" y="8.2" width="2.6" height="2.6" fill="#9aa0aa"/><rect x="8.2" y="11.7" width="2.6" height="2.6" fill="#9aa0aa"/><rect x="11.7" y="1.2" width="2.6" height="2.6" fill="#9aa0aa"/><rect x="11.7" y="4.7" width="2.6" height="2.6" fill="#9aa0aa"/><rect x="11.7" y="8.2" width="2.6" height="2.6" fill="#9aa0aa"/><rect x="11.7" y="11.7" width="2.6" height="2.6" fill="#9aa0aa"/></svg><svg class="a" style="left:1037px;top:1030px" width="7" height="5" viewBox="0 0 7 5" ><path d="M0 0h7L3.5 4.5z" fill="#222"/></svg><svg class="a" style="left:1050px;top:1024px" width="16" height="16" viewBox="0 0 16 16" ><rect x=".5" y=".5" width="15" height="15" fill="#3b5fa5"/><rect x="2" y="2" width="5.2" height="5.2" fill="#a8c6ee"/><rect x="8.8" y="2" width="5.2" height="5.2" fill="#a8c6ee"/><rect x="2" y="8.8" width="5.2" height="5.2" fill="#a8c6ee"/><rect x="8.8" y="8.8" width="5.2" height="5.2" fill="#a8c6ee"/></svg><svg class="a" style="left:1068px;top:1030px" width="7" height="5" viewBox="0 0 7 5" ><path d="M0 0h7L3.5 4.5z" fill="#222"/></svg><div class="a" style="left:0px;top:1048px;width:1920px;height:8px;background:#111"></div><div class="a" style="left:48px;top:1048px;width:344px;height:8px;background:#f0f0f0;border-top:1px solid #bbb"></div><div class="a" style="left:333px;top:1051px;width:4px;height:5px;background:#e8b21a"></div><div class="a" style="left:352px;top:1051px;width:2px;height:5px;background:#555"></div><div class="a" style="left:367px;top:1051px;width:2px;height:5px;background:#555"></div><div class="a" style="left:932px;top:1048px;width:48px;height:8px;background:#9b531c"></div><div class="a" style="left:1079px;top:1048px;width:48px;height:8px;background:#333"></div><div class="a" style="left:1818px;top:1052px;width:20px;height:4px;background:#ddd;opacity:.8"></div><div class="a" style="left:1916px;top:1048px;width:1px;height:8px;background:#666"></div>
</body></html>
